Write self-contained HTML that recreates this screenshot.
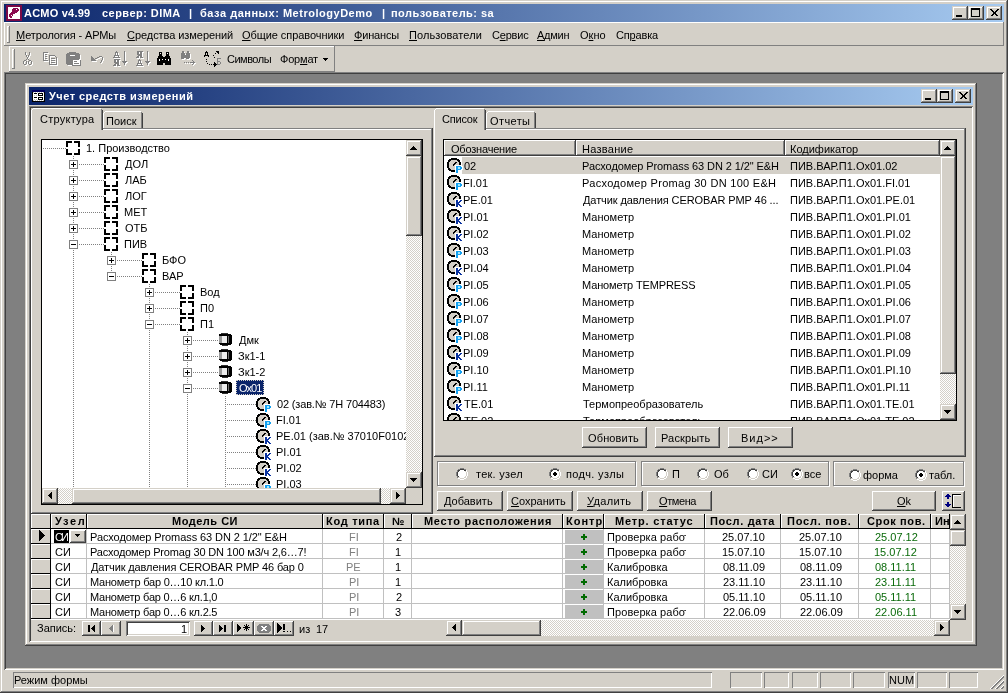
<!DOCTYPE html>
<html><head><meta charset="utf-8"><style>
html,body{margin:0;padding:0;width:1008px;height:693px;overflow:hidden;background:#d4d0c8}
body{position:relative;font-family:"Liberation Sans",sans-serif;font-size:11px;line-height:13px}
div,svg{position:absolute;box-sizing:border-box}
.t{white-space:pre;line-height:13px;will-change:transform}
u{text-decoration:underline;text-underline-offset:1px}
</style></head><body>
<div style="left:0px;top:0px;width:1008px;height:693px;background:#d4d0c8;box-shadow:inset -1px -1px #404040,inset 1px 1px #d4d0c8,inset -2px -2px #808080,inset 2px 2px #ffffff"></div>
<div style="left:4px;top:4px;width:1000px;height:18px;background:linear-gradient(to right,#0a246a,#a6caf0)"></div>
<svg style="left:6px;top:5px;" width="16" height="16" viewBox="0 0 16 16" shape-rendering="crispEdges"><rect x="0" y="0" width="16" height="16" fill="#7a0a46"/><rect x="2" y="2" width="12" height="12" fill="#ffffff"/><rect x="7" y="3" width="5" height="1" fill="#8b0a50"/><rect x="6" y="4" width="7" height="1" fill="#8b0a50"/><rect x="6" y="5" width="7" height="1" fill="#8b0a50"/><rect x="6" y="6" width="6" height="1" fill="#8b0a50"/><rect x="5" y="7" width="6" height="1" fill="#8b0a50"/><rect x="4" y="8" width="5" height="1" fill="#8b0a50"/><rect x="3" y="9" width="5" height="1" fill="#8b0a50"/><rect x="3" y="10" width="4" height="1" fill="#8b0a50"/><rect x="3" y="11" width="3" height="1" fill="#8b0a50"/><rect x="4" y="12" width="2" height="1" fill="#8b0a50"/><rect x="10" y="4" width="1" height="1" fill="#ffffff"/><rect x="9" y="8" width="1" height="1" fill="#ffffff"/><rect x="7" y="9" width="1" height="1" fill="#ffffff"/><rect x="5" y="10" width="1" height="1" fill="#ffffff"/></svg>
<div class="t" style="left:24.00px;top:7px;color:#fff;font-weight:bold;letter-spacing:0.222px;">ACMO v4.99</div>
<div class="t" style="left:102.00px;top:7px;color:#fff;font-weight:bold;letter-spacing:0.455px;">сервер: DIMA</div>
<div class="t" style="left:189.00px;top:7px;color:#fff;font-weight:bold;">|</div>
<div class="t" style="left:200.00px;top:7px;color:#fff;font-weight:bold;letter-spacing:0.520px;">база данных: MetrologyDemo</div>
<div class="t" style="left:382.00px;top:7px;color:#fff;font-weight:bold;">|</div>
<div class="t" style="left:391.00px;top:7px;color:#fff;font-weight:bold;letter-spacing:0.467px;">пользователь: sa</div>
<div style="left:952px;top:6px;width:16px;height:14px;background:#d4d0c8;box-shadow:inset -1px -1px #404040,inset 1px 1px #d4d0c8,inset -2px -2px #808080,inset 2px 2px #ffffff"></div>
<div style="left:968px;top:6px;width:16px;height:14px;background:#d4d0c8;box-shadow:inset -1px -1px #404040,inset 1px 1px #d4d0c8,inset -2px -2px #808080,inset 2px 2px #ffffff"></div>
<div style="left:986px;top:6px;width:16px;height:14px;background:#d4d0c8;box-shadow:inset -1px -1px #404040,inset 1px 1px #d4d0c8,inset -2px -2px #808080,inset 2px 2px #ffffff"></div>
<svg style="left:952px;top:6px;" width="16" height="14" viewBox="0 0 16 14" shape-rendering="crispEdges"><rect x="4" y="9" width="6" height="2" fill="#000"/></svg>
<svg style="left:968px;top:6px;" width="16" height="14" viewBox="0 0 16 14" shape-rendering="crispEdges"><rect x="3" y="2" width="9" height="9" fill="#000"/><rect x="4" y="4" width="7" height="6" fill="#d4d0c8"/></svg>
<svg style="left:986px;top:6px;" width="16" height="14" viewBox="0 0 16 14" shape-rendering="crispEdges"><path d="M4.5 3.5 L11.5 10.5 M11.5 3.5 L4.5 10.5 M5.5 3.5 L12.5 10.5 M12.5 3.5 L5.5 10.5" stroke="#000" stroke-width="1" shape-rendering="crispEdges"/></svg>
<div style="left:4px;top:22px;width:1000px;height:24px;box-shadow:inset -1px -1px #808080,inset 1px 1px #ffffff"></div>
<div style="left:7px;top:26px;width:3px;height:17px;box-shadow:inset -1px -1px #808080,inset 1px 1px #ffffff"></div>
<div class="t" style="left:16.00px;top:29px;color:#000;letter-spacing:-0.125px;"><u>М</u>етрология - АРМы</div>
<div class="t" style="left:127.00px;top:29px;color:#000;letter-spacing:-0.059px;"><u>С</u>редства измерений</div>
<div class="t" style="left:242.00px;top:29px;color:#000;letter-spacing:-0.062px;"><u>О</u>бщие справочники</div>
<div class="t" style="left:354.00px;top:29px;color:#000;letter-spacing:-0.167px;"><u>Ф</u>инансы</div>
<div class="t" style="left:409.00px;top:29px;color:#000;letter-spacing:0.091px;"><u>П</u>ользователи</div>
<div class="t" style="left:492.00px;top:29px;color:#000;letter-spacing:-0.200px;">С<u>е</u>рвис</div>
<div class="t" style="left:537.00px;top:29px;color:#000;letter-spacing:-0.250px;"><u>А</u>дмин</div>
<div class="t" style="left:580.00px;top:29px;color:#000;">О<u>к</u>но</div>
<div class="t" style="left:616.00px;top:29px;color:#000;letter-spacing:-0.167px;">Сп<u>р</u>авка</div>
<div style="left:9px;top:46px;width:326px;height:26px;box-shadow:inset -1px -1px #808080,inset 1px 1px #ffffff"></div>
<div style="left:12px;top:49px;width:3px;height:20px;box-shadow:inset -1px -1px #808080,inset 1px 1px #ffffff"></div>
<div class="t" style="left:227.00px;top:53px;color:#000;letter-spacing:-0.500px;">Символы</div>
<div class="t" style="left:280.00px;top:53px;color:#000;letter-spacing:-0.200px;">Фор<u>м</u>ат</div>
<svg style="left:323px;top:58px;" width="6" height="4" viewBox="0 0 6 4" shape-rendering="crispEdges"><rect x="0" y="0" width="5" height="1" fill="#000"/><rect x="1" y="1" width="3" height="1" fill="#000"/><rect x="2" y="2" width="1" height="1" fill="#000"/></svg>
<div style="left:4px;top:72px;width:1000px;height:598px;background:#808080;box-shadow:inset 1px 1px #808080,inset -1px -1px #ffffff,inset 2px 2px #404040,inset -2px -2px #d4d0c8"></div>
<div style="left:13px;top:672px;width:699px;height:16px;box-shadow:inset 1px 1px #808080,inset -1px -1px #ffffff"></div>
<div style="left:730px;top:672px;width:32px;height:16px;box-shadow:inset 1px 1px #808080,inset -1px -1px #ffffff"></div>
<div style="left:764px;top:672px;width:25px;height:16px;box-shadow:inset 1px 1px #808080,inset -1px -1px #ffffff"></div>
<div style="left:792px;top:672px;width:26px;height:16px;box-shadow:inset 1px 1px #808080,inset -1px -1px #ffffff"></div>
<div style="left:820px;top:672px;width:31px;height:16px;box-shadow:inset 1px 1px #808080,inset -1px -1px #ffffff"></div>
<div style="left:853px;top:672px;width:32px;height:16px;box-shadow:inset 1px 1px #808080,inset -1px -1px #ffffff"></div>
<div style="left:888px;top:672px;width:27px;height:16px;box-shadow:inset 1px 1px #808080,inset -1px -1px #ffffff"></div>
<div style="left:917px;top:672px;width:30px;height:16px;box-shadow:inset 1px 1px #808080,inset -1px -1px #ffffff"></div>
<div style="left:949px;top:672px;width:29px;height:16px;box-shadow:inset 1px 1px #808080,inset -1px -1px #ffffff"></div>
<div class="t" style="left:14.00px;top:674px;color:#000;">Режим формы</div>
<div class="t" style="left:889.00px;top:674px;color:#000;">NUM</div>
<svg style="left:990px;top:675px;" width="14" height="14" viewBox="0 0 14 14" shape-rendering="crispEdges"><rect x="0" y="13" width="1" height="1" fill="#fff"/><rect x="1" y="12" width="1" height="1" fill="#fff"/><rect x="2" y="11" width="1" height="1" fill="#fff"/><rect x="3" y="10" width="1" height="1" fill="#fff"/><rect x="4" y="9" width="1" height="1" fill="#fff"/><rect x="5" y="8" width="1" height="1" fill="#fff"/><rect x="5" y="13" width="1" height="1" fill="#fff"/><rect x="6" y="7" width="1" height="1" fill="#fff"/><rect x="6" y="12" width="1" height="1" fill="#fff"/><rect x="7" y="6" width="1" height="1" fill="#fff"/><rect x="7" y="11" width="1" height="1" fill="#fff"/><rect x="8" y="5" width="1" height="1" fill="#fff"/><rect x="8" y="10" width="1" height="1" fill="#fff"/><rect x="9" y="4" width="1" height="1" fill="#fff"/><rect x="9" y="9" width="1" height="1" fill="#fff"/><rect x="10" y="3" width="1" height="1" fill="#fff"/><rect x="10" y="8" width="1" height="1" fill="#fff"/><rect x="10" y="13" width="1" height="1" fill="#fff"/><rect x="11" y="2" width="1" height="1" fill="#fff"/><rect x="11" y="7" width="1" height="1" fill="#fff"/><rect x="11" y="12" width="1" height="1" fill="#fff"/><rect x="12" y="1" width="1" height="1" fill="#fff"/><rect x="12" y="6" width="1" height="1" fill="#fff"/><rect x="12" y="11" width="1" height="1" fill="#fff"/><rect x="13" y="0" width="1" height="1" fill="#fff"/><rect x="13" y="5" width="1" height="1" fill="#fff"/><rect x="13" y="10" width="1" height="1" fill="#fff"/><rect x="1" y="13" width="1" height="1" fill="#808080"/><rect x="2" y="12" width="1" height="1" fill="#808080"/><rect x="2" y="13" width="1" height="1" fill="#808080"/><rect x="3" y="11" width="1" height="1" fill="#808080"/><rect x="3" y="12" width="1" height="1" fill="#808080"/><rect x="4" y="10" width="1" height="1" fill="#808080"/><rect x="4" y="11" width="1" height="1" fill="#808080"/><rect x="5" y="9" width="1" height="1" fill="#808080"/><rect x="5" y="10" width="1" height="1" fill="#808080"/><rect x="6" y="8" width="1" height="1" fill="#808080"/><rect x="6" y="9" width="1" height="1" fill="#808080"/><rect x="6" y="13" width="1" height="1" fill="#808080"/><rect x="7" y="7" width="1" height="1" fill="#808080"/><rect x="7" y="8" width="1" height="1" fill="#808080"/><rect x="7" y="12" width="1" height="1" fill="#808080"/><rect x="7" y="13" width="1" height="1" fill="#808080"/><rect x="8" y="6" width="1" height="1" fill="#808080"/><rect x="8" y="7" width="1" height="1" fill="#808080"/><rect x="8" y="11" width="1" height="1" fill="#808080"/><rect x="8" y="12" width="1" height="1" fill="#808080"/><rect x="9" y="5" width="1" height="1" fill="#808080"/><rect x="9" y="6" width="1" height="1" fill="#808080"/><rect x="9" y="10" width="1" height="1" fill="#808080"/><rect x="9" y="11" width="1" height="1" fill="#808080"/><rect x="10" y="4" width="1" height="1" fill="#808080"/><rect x="10" y="5" width="1" height="1" fill="#808080"/><rect x="10" y="9" width="1" height="1" fill="#808080"/><rect x="10" y="10" width="1" height="1" fill="#808080"/><rect x="11" y="3" width="1" height="1" fill="#808080"/><rect x="11" y="4" width="1" height="1" fill="#808080"/><rect x="11" y="8" width="1" height="1" fill="#808080"/><rect x="11" y="9" width="1" height="1" fill="#808080"/><rect x="11" y="13" width="1" height="1" fill="#808080"/><rect x="12" y="2" width="1" height="1" fill="#808080"/><rect x="12" y="3" width="1" height="1" fill="#808080"/><rect x="12" y="7" width="1" height="1" fill="#808080"/><rect x="12" y="8" width="1" height="1" fill="#808080"/><rect x="12" y="12" width="1" height="1" fill="#808080"/><rect x="12" y="13" width="1" height="1" fill="#808080"/><rect x="13" y="1" width="1" height="1" fill="#808080"/><rect x="13" y="2" width="1" height="1" fill="#808080"/><rect x="13" y="6" width="1" height="1" fill="#808080"/><rect x="13" y="7" width="1" height="1" fill="#808080"/><rect x="13" y="11" width="1" height="1" fill="#808080"/><rect x="13" y="12" width="1" height="1" fill="#808080"/></svg>
<div style="left:25px;top:83px;width:952px;height:563px;background:#d4d0c8;box-shadow:inset -1px -1px #404040,inset 1px 1px #d4d0c8,inset -2px -2px #808080,inset 2px 2px #ffffff"></div>
<div style="left:29px;top:87px;width:944px;height:18px;background:linear-gradient(to right,#0a246a,#a6caf0)"></div>
<svg style="left:32px;top:90px;" width="13" height="12" viewBox="0 0 13 12" shape-rendering="crispEdges"><rect x="0" y="0" width="13" height="2" fill="#000060"/><rect x="0" y="2" width="1" height="10" fill="#000"/><rect x="12" y="2" width="1" height="10" fill="#000"/><rect x="0" y="11" width="13" height="1" fill="#000"/><rect x="1" y="2" width="11" height="9" fill="#fff"/><rect x="2" y="3" width="3" height="1" fill="#000"/><rect x="2" y="7" width="3" height="1" fill="#000"/><rect x="6" y="3" width="5" height="3" fill="#000"/><rect x="6" y="7" width="5" height="3" fill="#000"/><rect x="7" y="4" width="3" height="1" fill="#fff"/><rect x="7" y="8" width="3" height="1" fill="#fff"/><rect x="2" y="5" width="1" height="1" fill="#c0c0c0"/><rect x="4" y="5" width="1" height="1" fill="#c0c0c0"/><rect x="2" y="9" width="1" height="1" fill="#c0c0c0"/><rect x="4" y="9" width="1" height="1" fill="#c0c0c0"/><rect x="1" y="2" width="1" height="1" fill="#c0c0c0"/><rect x="3" y="2" width="1" height="1" fill="#c0c0c0"/><rect x="5" y="2" width="1" height="1" fill="#c0c0c0"/><rect x="7" y="2" width="1" height="1" fill="#c0c0c0"/><rect x="9" y="2" width="1" height="1" fill="#c0c0c0"/><rect x="11" y="2" width="1" height="1" fill="#c0c0c0"/><rect x="1" y="10" width="1" height="1" fill="#c0c0c0"/><rect x="3" y="10" width="1" height="1" fill="#c0c0c0"/><rect x="5" y="10" width="1" height="1" fill="#c0c0c0"/><rect x="7" y="10" width="1" height="1" fill="#c0c0c0"/><rect x="9" y="10" width="1" height="1" fill="#c0c0c0"/><rect x="11" y="10" width="1" height="1" fill="#c0c0c0"/></svg>
<div class="t" style="left:49.00px;top:90px;color:#fff;font-weight:bold;letter-spacing:0.476px;">Учет средств измерений</div>
<div style="left:921px;top:89px;width:16px;height:14px;background:#d4d0c8;box-shadow:inset -1px -1px #404040,inset 1px 1px #d4d0c8,inset -2px -2px #808080,inset 2px 2px #ffffff"></div>
<div style="left:937px;top:89px;width:16px;height:14px;background:#d4d0c8;box-shadow:inset -1px -1px #404040,inset 1px 1px #d4d0c8,inset -2px -2px #808080,inset 2px 2px #ffffff"></div>
<div style="left:955px;top:89px;width:16px;height:14px;background:#d4d0c8;box-shadow:inset -1px -1px #404040,inset 1px 1px #d4d0c8,inset -2px -2px #808080,inset 2px 2px #ffffff"></div>
<svg style="left:921px;top:89px;" width="16" height="14" viewBox="0 0 16 14" shape-rendering="crispEdges"><rect x="4" y="9" width="6" height="2" fill="#000"/></svg>
<svg style="left:937px;top:89px;" width="16" height="14" viewBox="0 0 16 14" shape-rendering="crispEdges"><rect x="3" y="2" width="9" height="9" fill="#000"/><rect x="4" y="4" width="7" height="6" fill="#d4d0c8"/></svg>
<svg style="left:955px;top:89px;" width="16" height="14" viewBox="0 0 16 14" shape-rendering="crispEdges"><path d="M4.5 3.5 L11.5 10.5 M11.5 3.5 L4.5 10.5 M5.5 3.5 L12.5 10.5 M12.5 3.5 L5.5 10.5" stroke="#000" stroke-width="1" shape-rendering="crispEdges"/></svg>
<div style="left:29px;top:106px;width:944px;height:536px;box-shadow:inset 1px 1px #808080,inset -1px -1px #ffffff,inset 2px 2px #404040,inset -2px -2px #d4d0c8"></div>
<div style="left:31px;top:128px;width:402px;height:386px;background:#d4d0c8"></div>
<div style="left:31px;top:128px;width:401px;height:1px;background:#808080"></div>
<div style="left:31px;top:129px;width:400px;height:1px;background:#ffffff"></div>
<div style="left:31px;top:129px;width:1px;height:384px;background:#ffffff"></div>
<div style="left:432px;top:128px;width:1px;height:386px;background:#404040"></div>
<div style="left:431px;top:129px;width:1px;height:384px;background:#808080"></div>
<div style="left:31px;top:513px;width:402px;height:1px;background:#404040"></div>
<div style="left:32px;top:512px;width:400px;height:1px;background:#808080"></div>
<div style="left:103px;top:111px;width:40px;height:17px;background:#d4d0c8"></div>
<div style="left:103px;top:113px;width:1px;height:15px;background:#ffffff"></div>
<div style="left:105px;top:111px;width:36px;height:1px;background:#ffffff"></div>
<div style="left:104px;top:112px;width:1px;height:1px;background:#ffffff"></div>
<div style="left:142px;top:113px;width:1px;height:15px;background:#404040"></div>
<div style="left:141px;top:112px;width:1px;height:16px;background:#808080"></div>
<div style="left:141px;top:112px;width:1px;height:1px;background:#808080"></div>
<div style="left:31px;top:108px;width:72px;height:22px;background:#d4d0c8"></div>
<div style="left:31px;top:110px;width:1px;height:20px;background:#ffffff"></div>
<div style="left:33px;top:108px;width:68px;height:1px;background:#ffffff"></div>
<div style="left:32px;top:109px;width:1px;height:1px;background:#ffffff"></div>
<div style="left:102px;top:110px;width:1px;height:20px;background:#404040"></div>
<div style="left:101px;top:109px;width:1px;height:21px;background:#808080"></div>
<div style="left:101px;top:109px;width:1px;height:1px;background:#808080"></div>
<div style="left:32px;top:128px;width:69px;height:1px;background:#d4d0c8"></div>
<div style="left:32px;top:129px;width:69px;height:1px;background:#d4d0c8"></div>
<div class="t" style="left:40.00px;top:113px;color:#000;letter-spacing:0.250px;">Структура</div>
<div class="t" style="left:106.00px;top:115px;color:#000;">Поиск</div>
<div style="left:41px;top:139px;width:382px;height:366px;background:#fff;border:1px solid #000"></div>
<svg style="left:42px;top:140px;overflow:hidden" width="364" height="348" viewBox="0 0 364 348" shape-rendering="crispEdges"><defs><pattern id="dt" width="2" height="2" patternUnits="userSpaceOnUse"><rect x="1" y="0" width="1" height="1" fill="#808080"/><rect x="0" y="1" width="1" height="1" fill="#808080"/></pattern></defs><g><rect x="31" y="15" width="1" height="333" fill="url(#dt)"/><rect x="69" y="111" width="1" height="26" fill="url(#dt)"/><rect x="107" y="143" width="1" height="205" fill="url(#dt)"/><rect x="145" y="191" width="1" height="157" fill="url(#dt)"/><rect x="183" y="255" width="1" height="93" fill="url(#dt)"/><rect x="0" y="8" width="24" height="1" fill="url(#dt)"/><rect x="31" y="24" width="31" height="1" fill="url(#dt)"/><rect x="31" y="40" width="31" height="1" fill="url(#dt)"/><rect x="31" y="56" width="31" height="1" fill="url(#dt)"/><rect x="31" y="72" width="31" height="1" fill="url(#dt)"/><rect x="31" y="88" width="31" height="1" fill="url(#dt)"/><rect x="31" y="104" width="31" height="1" fill="url(#dt)"/><rect x="69" y="120" width="31" height="1" fill="url(#dt)"/><rect x="69" y="136" width="31" height="1" fill="url(#dt)"/><rect x="107" y="152" width="31" height="1" fill="url(#dt)"/><rect x="107" y="168" width="31" height="1" fill="url(#dt)"/><rect x="107" y="184" width="31" height="1" fill="url(#dt)"/><rect x="145" y="200" width="31" height="1" fill="url(#dt)"/><rect x="145" y="216" width="31" height="1" fill="url(#dt)"/><rect x="145" y="232" width="31" height="1" fill="url(#dt)"/><rect x="145" y="248" width="31" height="1" fill="url(#dt)"/><rect x="183" y="264" width="31" height="1" fill="url(#dt)"/><rect x="183" y="280" width="31" height="1" fill="url(#dt)"/><rect x="183" y="296" width="31" height="1" fill="url(#dt)"/><rect x="183" y="312" width="31" height="1" fill="url(#dt)"/><rect x="183" y="328" width="31" height="1" fill="url(#dt)"/><rect x="183" y="344" width="31" height="1" fill="url(#dt)"/></g><g transform="translate(-42,-140)"><rect x="66" y="141" width="6" height="2" fill="#000"/><rect x="66" y="141" width="2" height="6" fill="#000"/><rect x="74" y="141" width="6" height="2" fill="#000"/><rect x="78" y="141" width="2" height="6" fill="#000"/><rect x="66" y="149" width="2" height="6" fill="#000"/><rect x="66" y="153" width="6" height="2" fill="#000"/><rect x="78" y="149" width="2" height="6" fill="#000"/><rect x="74" y="153" width="6" height="2" fill="#000"/><rect x="69" y="160" width="9" height="9" fill="#808080"/><rect x="70" y="161" width="7" height="7" fill="#fff"/><rect x="71" y="164" width="5" height="1" fill="#000"/><rect x="73" y="162" width="1" height="5" fill="#000"/><rect x="104" y="157" width="6" height="2" fill="#000"/><rect x="104" y="157" width="2" height="6" fill="#000"/><rect x="112" y="157" width="6" height="2" fill="#000"/><rect x="116" y="157" width="2" height="6" fill="#000"/><rect x="104" y="165" width="2" height="6" fill="#000"/><rect x="104" y="169" width="6" height="2" fill="#000"/><rect x="116" y="165" width="2" height="6" fill="#000"/><rect x="112" y="169" width="6" height="2" fill="#000"/><rect x="69" y="176" width="9" height="9" fill="#808080"/><rect x="70" y="177" width="7" height="7" fill="#fff"/><rect x="71" y="180" width="5" height="1" fill="#000"/><rect x="73" y="178" width="1" height="5" fill="#000"/><rect x="104" y="173" width="6" height="2" fill="#000"/><rect x="104" y="173" width="2" height="6" fill="#000"/><rect x="112" y="173" width="6" height="2" fill="#000"/><rect x="116" y="173" width="2" height="6" fill="#000"/><rect x="104" y="181" width="2" height="6" fill="#000"/><rect x="104" y="185" width="6" height="2" fill="#000"/><rect x="116" y="181" width="2" height="6" fill="#000"/><rect x="112" y="185" width="6" height="2" fill="#000"/><rect x="69" y="192" width="9" height="9" fill="#808080"/><rect x="70" y="193" width="7" height="7" fill="#fff"/><rect x="71" y="196" width="5" height="1" fill="#000"/><rect x="73" y="194" width="1" height="5" fill="#000"/><rect x="104" y="189" width="6" height="2" fill="#000"/><rect x="104" y="189" width="2" height="6" fill="#000"/><rect x="112" y="189" width="6" height="2" fill="#000"/><rect x="116" y="189" width="2" height="6" fill="#000"/><rect x="104" y="197" width="2" height="6" fill="#000"/><rect x="104" y="201" width="6" height="2" fill="#000"/><rect x="116" y="197" width="2" height="6" fill="#000"/><rect x="112" y="201" width="6" height="2" fill="#000"/><rect x="69" y="208" width="9" height="9" fill="#808080"/><rect x="70" y="209" width="7" height="7" fill="#fff"/><rect x="71" y="212" width="5" height="1" fill="#000"/><rect x="73" y="210" width="1" height="5" fill="#000"/><rect x="104" y="205" width="6" height="2" fill="#000"/><rect x="104" y="205" width="2" height="6" fill="#000"/><rect x="112" y="205" width="6" height="2" fill="#000"/><rect x="116" y="205" width="2" height="6" fill="#000"/><rect x="104" y="213" width="2" height="6" fill="#000"/><rect x="104" y="217" width="6" height="2" fill="#000"/><rect x="116" y="213" width="2" height="6" fill="#000"/><rect x="112" y="217" width="6" height="2" fill="#000"/><rect x="69" y="224" width="9" height="9" fill="#808080"/><rect x="70" y="225" width="7" height="7" fill="#fff"/><rect x="71" y="228" width="5" height="1" fill="#000"/><rect x="73" y="226" width="1" height="5" fill="#000"/><rect x="104" y="221" width="6" height="2" fill="#000"/><rect x="104" y="221" width="2" height="6" fill="#000"/><rect x="112" y="221" width="6" height="2" fill="#000"/><rect x="116" y="221" width="2" height="6" fill="#000"/><rect x="104" y="229" width="2" height="6" fill="#000"/><rect x="104" y="233" width="6" height="2" fill="#000"/><rect x="116" y="229" width="2" height="6" fill="#000"/><rect x="112" y="233" width="6" height="2" fill="#000"/><rect x="69" y="240" width="9" height="9" fill="#808080"/><rect x="70" y="241" width="7" height="7" fill="#fff"/><rect x="71" y="244" width="5" height="1" fill="#000"/><rect x="104" y="237" width="6" height="2" fill="#000"/><rect x="104" y="237" width="2" height="6" fill="#000"/><rect x="112" y="237" width="6" height="2" fill="#000"/><rect x="116" y="237" width="2" height="6" fill="#000"/><rect x="104" y="245" width="2" height="6" fill="#000"/><rect x="104" y="249" width="6" height="2" fill="#000"/><rect x="116" y="245" width="2" height="6" fill="#000"/><rect x="112" y="249" width="6" height="2" fill="#000"/><rect x="107" y="256" width="9" height="9" fill="#808080"/><rect x="108" y="257" width="7" height="7" fill="#fff"/><rect x="109" y="260" width="5" height="1" fill="#000"/><rect x="111" y="258" width="1" height="5" fill="#000"/><rect x="142" y="253" width="6" height="2" fill="#000"/><rect x="142" y="253" width="2" height="6" fill="#000"/><rect x="150" y="253" width="6" height="2" fill="#000"/><rect x="154" y="253" width="2" height="6" fill="#000"/><rect x="142" y="261" width="2" height="6" fill="#000"/><rect x="142" y="265" width="6" height="2" fill="#000"/><rect x="154" y="261" width="2" height="6" fill="#000"/><rect x="150" y="265" width="6" height="2" fill="#000"/><rect x="107" y="272" width="9" height="9" fill="#808080"/><rect x="108" y="273" width="7" height="7" fill="#fff"/><rect x="109" y="276" width="5" height="1" fill="#000"/><rect x="142" y="269" width="6" height="2" fill="#000"/><rect x="142" y="269" width="2" height="6" fill="#000"/><rect x="150" y="269" width="6" height="2" fill="#000"/><rect x="154" y="269" width="2" height="6" fill="#000"/><rect x="142" y="277" width="2" height="6" fill="#000"/><rect x="142" y="281" width="6" height="2" fill="#000"/><rect x="154" y="277" width="2" height="6" fill="#000"/><rect x="150" y="281" width="6" height="2" fill="#000"/><rect x="145" y="288" width="9" height="9" fill="#808080"/><rect x="146" y="289" width="7" height="7" fill="#fff"/><rect x="147" y="292" width="5" height="1" fill="#000"/><rect x="149" y="290" width="1" height="5" fill="#000"/><rect x="180" y="285" width="6" height="2" fill="#000"/><rect x="180" y="285" width="2" height="6" fill="#000"/><rect x="188" y="285" width="6" height="2" fill="#000"/><rect x="192" y="285" width="2" height="6" fill="#000"/><rect x="180" y="293" width="2" height="6" fill="#000"/><rect x="180" y="297" width="6" height="2" fill="#000"/><rect x="192" y="293" width="2" height="6" fill="#000"/><rect x="188" y="297" width="6" height="2" fill="#000"/><rect x="145" y="304" width="9" height="9" fill="#808080"/><rect x="146" y="305" width="7" height="7" fill="#fff"/><rect x="147" y="308" width="5" height="1" fill="#000"/><rect x="149" y="306" width="1" height="5" fill="#000"/><rect x="180" y="301" width="6" height="2" fill="#000"/><rect x="180" y="301" width="2" height="6" fill="#000"/><rect x="188" y="301" width="6" height="2" fill="#000"/><rect x="192" y="301" width="2" height="6" fill="#000"/><rect x="180" y="309" width="2" height="6" fill="#000"/><rect x="180" y="313" width="6" height="2" fill="#000"/><rect x="192" y="309" width="2" height="6" fill="#000"/><rect x="188" y="313" width="6" height="2" fill="#000"/><rect x="145" y="320" width="9" height="9" fill="#808080"/><rect x="146" y="321" width="7" height="7" fill="#fff"/><rect x="147" y="324" width="5" height="1" fill="#000"/><rect x="180" y="317" width="6" height="2" fill="#000"/><rect x="180" y="317" width="2" height="6" fill="#000"/><rect x="188" y="317" width="6" height="2" fill="#000"/><rect x="192" y="317" width="2" height="6" fill="#000"/><rect x="180" y="325" width="2" height="6" fill="#000"/><rect x="180" y="329" width="6" height="2" fill="#000"/><rect x="192" y="325" width="2" height="6" fill="#000"/><rect x="188" y="329" width="6" height="2" fill="#000"/><rect x="183" y="336" width="9" height="9" fill="#808080"/><rect x="184" y="337" width="7" height="7" fill="#fff"/><rect x="185" y="340" width="5" height="1" fill="#000"/><rect x="187" y="338" width="1" height="5" fill="#000"/><rect x="221" y="333" width="7" height="1" fill="#303030"/><rect x="219" y="334" width="12" height="1" fill="#000"/><rect x="219" y="335" width="13" height="1" fill="#000"/><rect x="219" y="343" width="13" height="1" fill="#000"/><rect x="220" y="344" width="11" height="1" fill="#000"/><rect x="222" y="345" width="6" height="1" fill="#303030"/><rect x="219" y="336" width="3" height="7" fill="#9a9a9a"/><rect x="222" y="336" width="5" height="7" fill="#ececec"/><rect x="227" y="336" width="1" height="7" fill="#000"/><rect x="228" y="336" width="1" height="7" fill="#6a6a6a"/><rect x="229" y="336" width="3" height="7" fill="#000"/><rect x="183" y="352" width="9" height="9" fill="#808080"/><rect x="184" y="353" width="7" height="7" fill="#fff"/><rect x="185" y="356" width="5" height="1" fill="#000"/><rect x="187" y="354" width="1" height="5" fill="#000"/><rect x="221" y="349" width="7" height="1" fill="#303030"/><rect x="219" y="350" width="12" height="1" fill="#000"/><rect x="219" y="351" width="13" height="1" fill="#000"/><rect x="219" y="359" width="13" height="1" fill="#000"/><rect x="220" y="360" width="11" height="1" fill="#000"/><rect x="222" y="361" width="6" height="1" fill="#303030"/><rect x="219" y="352" width="3" height="7" fill="#9a9a9a"/><rect x="222" y="352" width="5" height="7" fill="#ececec"/><rect x="227" y="352" width="1" height="7" fill="#000"/><rect x="228" y="352" width="1" height="7" fill="#6a6a6a"/><rect x="229" y="352" width="3" height="7" fill="#000"/><rect x="183" y="368" width="9" height="9" fill="#808080"/><rect x="184" y="369" width="7" height="7" fill="#fff"/><rect x="185" y="372" width="5" height="1" fill="#000"/><rect x="187" y="370" width="1" height="5" fill="#000"/><rect x="221" y="365" width="7" height="1" fill="#303030"/><rect x="219" y="366" width="12" height="1" fill="#000"/><rect x="219" y="367" width="13" height="1" fill="#000"/><rect x="219" y="375" width="13" height="1" fill="#000"/><rect x="220" y="376" width="11" height="1" fill="#000"/><rect x="222" y="377" width="6" height="1" fill="#303030"/><rect x="219" y="368" width="3" height="7" fill="#9a9a9a"/><rect x="222" y="368" width="5" height="7" fill="#ececec"/><rect x="227" y="368" width="1" height="7" fill="#000"/><rect x="228" y="368" width="1" height="7" fill="#6a6a6a"/><rect x="229" y="368" width="3" height="7" fill="#000"/><rect x="183" y="384" width="9" height="9" fill="#808080"/><rect x="184" y="385" width="7" height="7" fill="#fff"/><rect x="185" y="388" width="5" height="1" fill="#000"/><rect x="221" y="381" width="7" height="1" fill="#303030"/><rect x="219" y="382" width="12" height="1" fill="#000"/><rect x="219" y="383" width="13" height="1" fill="#000"/><rect x="219" y="391" width="13" height="1" fill="#000"/><rect x="220" y="392" width="11" height="1" fill="#000"/><rect x="222" y="393" width="6" height="1" fill="#303030"/><rect x="219" y="384" width="3" height="7" fill="#9a9a9a"/><rect x="222" y="384" width="5" height="7" fill="#ececec"/><rect x="227" y="384" width="1" height="7" fill="#000"/><rect x="228" y="384" width="1" height="7" fill="#6a6a6a"/><rect x="229" y="384" width="3" height="7" fill="#000"/><rect x="260" y="399" width="6" height="1" fill="#d4d0c8"/><rect x="259" y="400" width="8" height="1" fill="#d4d0c8"/><rect x="258" y="401" width="10" height="6" fill="#d4d0c8"/><rect x="259" y="407" width="8" height="1" fill="#d4d0c8"/><rect x="260" y="408" width="6" height="1" fill="#d4d0c8"/><rect x="260" y="397" width="6" height="1" fill="#000"/><rect x="258" y="398" width="10" height="1" fill="#000"/><rect x="257" y="399" width="3" height="1" fill="#000"/><rect x="266" y="399" width="3" height="1" fill="#000"/><rect x="257" y="400" width="2" height="1" fill="#000"/><rect x="267" y="400" width="2" height="1" fill="#000"/><rect x="256" y="401" width="2" height="6" fill="#000"/><rect x="268" y="401" width="2" height="6" fill="#000"/><rect x="257" y="407" width="2" height="1" fill="#000"/><rect x="267" y="407" width="2" height="1" fill="#000"/><rect x="257" y="408" width="3" height="1" fill="#000"/><rect x="266" y="408" width="3" height="1" fill="#000"/><rect x="258" y="409" width="10" height="1" fill="#000"/><rect x="260" y="410" width="6" height="1" fill="#000"/><rect x="264" y="401" width="2" height="1" fill="#000"/><rect x="263" y="402" width="2" height="1" fill="#000"/><rect x="262" y="403" width="2" height="1" fill="#000"/><rect x="262" y="404" width="1" height="1" fill="#000"/><rect x="264" y="404" width="7" height="3" fill="#fff"/><rect x="264" y="405" width="4" height="8" fill="#fff"/><rect x="268" y="405" width="4" height="4" fill="#fff"/><rect x="264" y="407" width="7" height="3" fill="#fff"/><rect x="267" y="406" width="2" height="2" fill="#a0e8ff"/><rect x="265" y="405" width="5" height="1" fill="#14a0f0"/><rect x="265" y="406" width="2" height="6" fill="#14a0f0"/><rect x="269" y="406" width="2" height="2" fill="#14a0f0"/><rect x="265" y="408" width="5" height="1" fill="#14a0f0"/><rect x="260" y="415" width="6" height="1" fill="#d4d0c8"/><rect x="259" y="416" width="8" height="1" fill="#d4d0c8"/><rect x="258" y="417" width="10" height="6" fill="#d4d0c8"/><rect x="259" y="423" width="8" height="1" fill="#d4d0c8"/><rect x="260" y="424" width="6" height="1" fill="#d4d0c8"/><rect x="260" y="413" width="6" height="1" fill="#000"/><rect x="258" y="414" width="10" height="1" fill="#000"/><rect x="257" y="415" width="3" height="1" fill="#000"/><rect x="266" y="415" width="3" height="1" fill="#000"/><rect x="257" y="416" width="2" height="1" fill="#000"/><rect x="267" y="416" width="2" height="1" fill="#000"/><rect x="256" y="417" width="2" height="6" fill="#000"/><rect x="268" y="417" width="2" height="6" fill="#000"/><rect x="257" y="423" width="2" height="1" fill="#000"/><rect x="267" y="423" width="2" height="1" fill="#000"/><rect x="257" y="424" width="3" height="1" fill="#000"/><rect x="266" y="424" width="3" height="1" fill="#000"/><rect x="258" y="425" width="10" height="1" fill="#000"/><rect x="260" y="426" width="6" height="1" fill="#000"/><rect x="264" y="417" width="2" height="1" fill="#000"/><rect x="263" y="418" width="2" height="1" fill="#000"/><rect x="262" y="419" width="2" height="1" fill="#000"/><rect x="262" y="420" width="1" height="1" fill="#000"/><rect x="264" y="420" width="7" height="3" fill="#fff"/><rect x="264" y="421" width="4" height="8" fill="#fff"/><rect x="268" y="421" width="4" height="4" fill="#fff"/><rect x="264" y="423" width="7" height="3" fill="#fff"/><rect x="267" y="422" width="2" height="2" fill="#a0e8ff"/><rect x="265" y="421" width="5" height="1" fill="#14a0f0"/><rect x="265" y="422" width="2" height="6" fill="#14a0f0"/><rect x="269" y="422" width="2" height="2" fill="#14a0f0"/><rect x="265" y="424" width="5" height="1" fill="#14a0f0"/><rect x="260" y="431" width="6" height="1" fill="#d4d0c8"/><rect x="259" y="432" width="8" height="1" fill="#d4d0c8"/><rect x="258" y="433" width="10" height="6" fill="#d4d0c8"/><rect x="259" y="439" width="8" height="1" fill="#d4d0c8"/><rect x="260" y="440" width="6" height="1" fill="#d4d0c8"/><rect x="260" y="429" width="6" height="1" fill="#000"/><rect x="258" y="430" width="10" height="1" fill="#000"/><rect x="257" y="431" width="3" height="1" fill="#000"/><rect x="266" y="431" width="3" height="1" fill="#000"/><rect x="257" y="432" width="2" height="1" fill="#000"/><rect x="267" y="432" width="2" height="1" fill="#000"/><rect x="256" y="433" width="2" height="6" fill="#000"/><rect x="268" y="433" width="2" height="6" fill="#000"/><rect x="257" y="439" width="2" height="1" fill="#000"/><rect x="267" y="439" width="2" height="1" fill="#000"/><rect x="257" y="440" width="3" height="1" fill="#000"/><rect x="266" y="440" width="3" height="1" fill="#000"/><rect x="258" y="441" width="10" height="1" fill="#000"/><rect x="260" y="442" width="6" height="1" fill="#000"/><rect x="264" y="433" width="2" height="1" fill="#000"/><rect x="263" y="434" width="2" height="1" fill="#000"/><rect x="262" y="435" width="2" height="1" fill="#000"/><rect x="262" y="436" width="1" height="1" fill="#000"/><rect x="264" y="436" width="4" height="9" fill="#fff"/><rect x="268" y="436" width="4" height="3" fill="#fff"/><rect x="267" y="437" width="4" height="3" fill="#fff"/><rect x="266" y="438" width="4" height="3" fill="#fff"/><rect x="266" y="439" width="3" height="3" fill="#fff"/><rect x="266" y="440" width="4" height="3" fill="#fff"/><rect x="267" y="441" width="4" height="3" fill="#fff"/><rect x="268" y="442" width="4" height="3" fill="#fff"/><rect x="265" y="437" width="2" height="7" fill="#0a32a0"/><rect x="269" y="437" width="2" height="1" fill="#0a32a0"/><rect x="268" y="438" width="2" height="1" fill="#0a32a0"/><rect x="267" y="439" width="2" height="1" fill="#0a32a0"/><rect x="267" y="440" width="1" height="1" fill="#0a32a0"/><rect x="267" y="441" width="2" height="1" fill="#0a32a0"/><rect x="268" y="442" width="2" height="1" fill="#0a32a0"/><rect x="269" y="443" width="2" height="1" fill="#0a32a0"/><rect x="260" y="447" width="6" height="1" fill="#d4d0c8"/><rect x="259" y="448" width="8" height="1" fill="#d4d0c8"/><rect x="258" y="449" width="10" height="6" fill="#d4d0c8"/><rect x="259" y="455" width="8" height="1" fill="#d4d0c8"/><rect x="260" y="456" width="6" height="1" fill="#d4d0c8"/><rect x="260" y="445" width="6" height="1" fill="#000"/><rect x="258" y="446" width="10" height="1" fill="#000"/><rect x="257" y="447" width="3" height="1" fill="#000"/><rect x="266" y="447" width="3" height="1" fill="#000"/><rect x="257" y="448" width="2" height="1" fill="#000"/><rect x="267" y="448" width="2" height="1" fill="#000"/><rect x="256" y="449" width="2" height="6" fill="#000"/><rect x="268" y="449" width="2" height="6" fill="#000"/><rect x="257" y="455" width="2" height="1" fill="#000"/><rect x="267" y="455" width="2" height="1" fill="#000"/><rect x="257" y="456" width="3" height="1" fill="#000"/><rect x="266" y="456" width="3" height="1" fill="#000"/><rect x="258" y="457" width="10" height="1" fill="#000"/><rect x="260" y="458" width="6" height="1" fill="#000"/><rect x="264" y="449" width="2" height="1" fill="#000"/><rect x="263" y="450" width="2" height="1" fill="#000"/><rect x="262" y="451" width="2" height="1" fill="#000"/><rect x="262" y="452" width="1" height="1" fill="#000"/><rect x="264" y="452" width="4" height="9" fill="#fff"/><rect x="268" y="452" width="4" height="3" fill="#fff"/><rect x="267" y="453" width="4" height="3" fill="#fff"/><rect x="266" y="454" width="4" height="3" fill="#fff"/><rect x="266" y="455" width="3" height="3" fill="#fff"/><rect x="266" y="456" width="4" height="3" fill="#fff"/><rect x="267" y="457" width="4" height="3" fill="#fff"/><rect x="268" y="458" width="4" height="3" fill="#fff"/><rect x="265" y="453" width="2" height="7" fill="#0a32a0"/><rect x="269" y="453" width="2" height="1" fill="#0a32a0"/><rect x="268" y="454" width="2" height="1" fill="#0a32a0"/><rect x="267" y="455" width="2" height="1" fill="#0a32a0"/><rect x="267" y="456" width="1" height="1" fill="#0a32a0"/><rect x="267" y="457" width="2" height="1" fill="#0a32a0"/><rect x="268" y="458" width="2" height="1" fill="#0a32a0"/><rect x="269" y="459" width="2" height="1" fill="#0a32a0"/><rect x="260" y="463" width="6" height="1" fill="#d4d0c8"/><rect x="259" y="464" width="8" height="1" fill="#d4d0c8"/><rect x="258" y="465" width="10" height="6" fill="#d4d0c8"/><rect x="259" y="471" width="8" height="1" fill="#d4d0c8"/><rect x="260" y="472" width="6" height="1" fill="#d4d0c8"/><rect x="260" y="461" width="6" height="1" fill="#000"/><rect x="258" y="462" width="10" height="1" fill="#000"/><rect x="257" y="463" width="3" height="1" fill="#000"/><rect x="266" y="463" width="3" height="1" fill="#000"/><rect x="257" y="464" width="2" height="1" fill="#000"/><rect x="267" y="464" width="2" height="1" fill="#000"/><rect x="256" y="465" width="2" height="6" fill="#000"/><rect x="268" y="465" width="2" height="6" fill="#000"/><rect x="257" y="471" width="2" height="1" fill="#000"/><rect x="267" y="471" width="2" height="1" fill="#000"/><rect x="257" y="472" width="3" height="1" fill="#000"/><rect x="266" y="472" width="3" height="1" fill="#000"/><rect x="258" y="473" width="10" height="1" fill="#000"/><rect x="260" y="474" width="6" height="1" fill="#000"/><rect x="264" y="465" width="2" height="1" fill="#000"/><rect x="263" y="466" width="2" height="1" fill="#000"/><rect x="262" y="467" width="2" height="1" fill="#000"/><rect x="262" y="468" width="1" height="1" fill="#000"/><rect x="264" y="468" width="4" height="9" fill="#fff"/><rect x="268" y="468" width="4" height="3" fill="#fff"/><rect x="267" y="469" width="4" height="3" fill="#fff"/><rect x="266" y="470" width="4" height="3" fill="#fff"/><rect x="266" y="471" width="3" height="3" fill="#fff"/><rect x="266" y="472" width="4" height="3" fill="#fff"/><rect x="267" y="473" width="4" height="3" fill="#fff"/><rect x="268" y="474" width="4" height="3" fill="#fff"/><rect x="265" y="469" width="2" height="7" fill="#0a32a0"/><rect x="269" y="469" width="2" height="1" fill="#0a32a0"/><rect x="268" y="470" width="2" height="1" fill="#0a32a0"/><rect x="267" y="471" width="2" height="1" fill="#0a32a0"/><rect x="267" y="472" width="1" height="1" fill="#0a32a0"/><rect x="267" y="473" width="2" height="1" fill="#0a32a0"/><rect x="268" y="474" width="2" height="1" fill="#0a32a0"/><rect x="269" y="475" width="2" height="1" fill="#0a32a0"/><rect x="260" y="479" width="6" height="1" fill="#d4d0c8"/><rect x="259" y="480" width="8" height="1" fill="#d4d0c8"/><rect x="258" y="481" width="10" height="6" fill="#d4d0c8"/><rect x="259" y="487" width="8" height="1" fill="#d4d0c8"/><rect x="260" y="488" width="6" height="1" fill="#d4d0c8"/><rect x="260" y="477" width="6" height="1" fill="#000"/><rect x="258" y="478" width="10" height="1" fill="#000"/><rect x="257" y="479" width="3" height="1" fill="#000"/><rect x="266" y="479" width="3" height="1" fill="#000"/><rect x="257" y="480" width="2" height="1" fill="#000"/><rect x="267" y="480" width="2" height="1" fill="#000"/><rect x="256" y="481" width="2" height="6" fill="#000"/><rect x="268" y="481" width="2" height="6" fill="#000"/><rect x="257" y="487" width="2" height="1" fill="#000"/><rect x="267" y="487" width="2" height="1" fill="#000"/><rect x="257" y="488" width="3" height="1" fill="#000"/><rect x="266" y="488" width="3" height="1" fill="#000"/><rect x="258" y="489" width="10" height="1" fill="#000"/><rect x="260" y="490" width="6" height="1" fill="#000"/><rect x="264" y="481" width="2" height="1" fill="#000"/><rect x="263" y="482" width="2" height="1" fill="#000"/><rect x="262" y="483" width="2" height="1" fill="#000"/><rect x="262" y="484" width="1" height="1" fill="#000"/><rect x="264" y="484" width="7" height="3" fill="#fff"/><rect x="264" y="485" width="4" height="8" fill="#fff"/><rect x="268" y="485" width="4" height="4" fill="#fff"/><rect x="264" y="487" width="7" height="3" fill="#fff"/><rect x="267" y="486" width="2" height="2" fill="#a0e8ff"/><rect x="265" y="485" width="5" height="1" fill="#14a0f0"/><rect x="265" y="486" width="2" height="6" fill="#14a0f0"/><rect x="269" y="486" width="2" height="2" fill="#14a0f0"/><rect x="265" y="488" width="5" height="1" fill="#14a0f0"/></g></svg>
<div style="left:236px;top:380px;width:28px;height:15px;background:#0a246a;outline:1px dotted #d4d0c8;outline-offset:-1px"></div>
<div class="t" style="left:86.00px;top:142px;color:#000;">1. Производство</div>
<div class="t" style="left:125.00px;top:158px;color:#000;">ДОЛ</div>
<div class="t" style="left:125.00px;top:174px;color:#000;">ЛАБ</div>
<div class="t" style="left:125.00px;top:190px;color:#000;">ЛОГ</div>
<div class="t" style="left:124.00px;top:206px;color:#000;">МЕТ</div>
<div class="t" style="left:125.00px;top:222px;color:#000;">ОТБ</div>
<div class="t" style="left:124.00px;top:238px;color:#000;">ПИВ</div>
<div class="t" style="left:162.00px;top:254px;color:#000;">БФО</div>
<div class="t" style="left:162.00px;top:270px;color:#000;">ВАР</div>
<div class="t" style="left:200.00px;top:286px;color:#000;">Вод</div>
<div class="t" style="left:200.00px;top:302px;color:#000;">П0</div>
<div class="t" style="left:200.00px;top:318px;color:#000;">П1</div>
<div class="t" style="left:239.00px;top:334px;color:#000;">Дмк</div>
<div class="t" style="left:238.00px;top:350px;color:#000;">Зк1-1</div>
<div class="t" style="left:238.00px;top:366px;color:#000;">Зк1-2</div>
<div class="t" style="left:239.00px;top:382px;color:#fff;letter-spacing:-1.000px;">Ox01</div>
<div class="t" style="left:277.00px;top:398px;color:#000;letter-spacing:-0.158px;">02 (зав.№ 7H 704483)</div>
<div class="t" style="left:276.00px;top:414px;color:#000;">FI.01</div>
<div class="t" style="left:276.00px;top:430px;color:#000;">PE.01 (зав.№ 37010F0102</div>
<div class="t" style="left:276.00px;top:446px;color:#000;">PI.01</div>
<div class="t" style="left:276.00px;top:462px;color:#000;">PI.02</div>
<div class="t" style="left:276.00px;top:478px;color:#000;">PI.03</div>
<div style="left:406px;top:140px;width:16px;height:348px;background-color:#d4d0c8;background-image:linear-gradient(45deg,#fff 25%,transparent 25%,transparent 75%,#fff 75%),linear-gradient(45deg,#fff 25%,transparent 25%,transparent 75%,#fff 75%);background-size:2px 2px;background-position:0 0,1px 1px"></div>
<div style="left:406px;top:140px;width:16px;height:16px;background:#d4d0c8;box-shadow:inset -1px -1px #404040,inset 1px 1px #d4d0c8,inset -2px -2px #808080,inset 2px 2px #ffffff"></div>
<svg style="left:410px;top:146px;" width="7" height="4" viewBox="0 0 7 4" shape-rendering="crispEdges"><rect x="0" y="3" width="7" height="1" fill="#000"/><rect x="1" y="2" width="5" height="1" fill="#000"/><rect x="2" y="1" width="3" height="1" fill="#000"/><rect x="3" y="0" width="1" height="1" fill="#000"/></svg>
<div style="left:406px;top:156px;width:16px;height:80px;background:#d4d0c8;box-shadow:inset -1px -1px #404040,inset 1px 1px #d4d0c8,inset -2px -2px #808080,inset 2px 2px #ffffff"></div>
<div style="left:406px;top:472px;width:16px;height:16px;background:#d4d0c8;box-shadow:inset -1px -1px #404040,inset 1px 1px #d4d0c8,inset -2px -2px #808080,inset 2px 2px #ffffff"></div>
<svg style="left:410px;top:478px;" width="7" height="4" viewBox="0 0 7 4" shape-rendering="crispEdges"><rect x="0" y="0" width="7" height="1" fill="#000"/><rect x="1" y="1" width="5" height="1" fill="#000"/><rect x="2" y="2" width="3" height="1" fill="#000"/><rect x="3" y="3" width="1" height="1" fill="#000"/></svg>
<div style="left:42px;top:488px;width:364px;height:16px;background-color:#d4d0c8;background-image:linear-gradient(45deg,#fff 25%,transparent 25%,transparent 75%,#fff 75%),linear-gradient(45deg,#fff 25%,transparent 25%,transparent 75%,#fff 75%);background-size:2px 2px;background-position:0 0,1px 1px"></div>
<div style="left:42px;top:488px;width:16px;height:16px;background:#d4d0c8;box-shadow:inset -1px -1px #404040,inset 1px 1px #d4d0c8,inset -2px -2px #808080,inset 2px 2px #ffffff"></div>
<svg style="left:48px;top:492px;" width="4" height="7" viewBox="0 0 4 7" shape-rendering="crispEdges"><rect x="3" y="0" width="1" height="7" fill="#000"/><rect x="2" y="1" width="1" height="5" fill="#000"/><rect x="1" y="2" width="1" height="3" fill="#000"/><rect x="0" y="3" width="1" height="1" fill="#000"/></svg>
<div style="left:72px;top:488px;width:309px;height:16px;background:#d4d0c8;box-shadow:inset -1px -1px #404040,inset 1px 1px #d4d0c8,inset -2px -2px #808080,inset 2px 2px #ffffff"></div>
<div style="left:390px;top:488px;width:16px;height:16px;background:#d4d0c8;box-shadow:inset -1px -1px #404040,inset 1px 1px #d4d0c8,inset -2px -2px #808080,inset 2px 2px #ffffff"></div>
<svg style="left:396px;top:492px;" width="4" height="7" viewBox="0 0 4 7" shape-rendering="crispEdges"><rect x="0" y="0" width="1" height="7" fill="#000"/><rect x="1" y="1" width="1" height="5" fill="#000"/><rect x="2" y="2" width="1" height="3" fill="#000"/><rect x="3" y="3" width="1" height="1" fill="#000"/></svg>
<div style="left:406px;top:488px;width:16px;height:16px;background:#d4d0c8"></div>
<div style="left:434px;top:128px;width:532px;height:329px;background:#d4d0c8"></div>
<div style="left:434px;top:128px;width:531px;height:1px;background:#808080"></div>
<div style="left:434px;top:129px;width:530px;height:1px;background:#ffffff"></div>
<div style="left:434px;top:129px;width:1px;height:327px;background:#ffffff"></div>
<div style="left:965px;top:128px;width:1px;height:329px;background:#404040"></div>
<div style="left:964px;top:129px;width:1px;height:327px;background:#808080"></div>
<div style="left:434px;top:456px;width:532px;height:1px;background:#404040"></div>
<div style="left:435px;top:455px;width:530px;height:1px;background:#808080"></div>
<div style="left:486px;top:111px;width:50px;height:17px;background:#d4d0c8"></div>
<div style="left:486px;top:113px;width:1px;height:15px;background:#ffffff"></div>
<div style="left:488px;top:111px;width:46px;height:1px;background:#ffffff"></div>
<div style="left:487px;top:112px;width:1px;height:1px;background:#ffffff"></div>
<div style="left:535px;top:113px;width:1px;height:15px;background:#404040"></div>
<div style="left:534px;top:112px;width:1px;height:16px;background:#808080"></div>
<div style="left:534px;top:112px;width:1px;height:1px;background:#808080"></div>
<div style="left:434px;top:108px;width:52px;height:22px;background:#d4d0c8"></div>
<div style="left:434px;top:110px;width:1px;height:20px;background:#ffffff"></div>
<div style="left:436px;top:108px;width:48px;height:1px;background:#ffffff"></div>
<div style="left:435px;top:109px;width:1px;height:1px;background:#ffffff"></div>
<div style="left:485px;top:110px;width:1px;height:20px;background:#404040"></div>
<div style="left:484px;top:109px;width:1px;height:21px;background:#808080"></div>
<div style="left:484px;top:109px;width:1px;height:1px;background:#808080"></div>
<div style="left:435px;top:128px;width:49px;height:1px;background:#d4d0c8"></div>
<div style="left:435px;top:129px;width:49px;height:1px;background:#d4d0c8"></div>
<div class="t" style="left:442.00px;top:113px;color:#000;letter-spacing:-0.200px;">Список</div>
<div class="t" style="left:490.00px;top:115px;color:#000;letter-spacing:0.400px;">Отчеты</div>
<div style="left:443px;top:139px;width:514px;height:282px;background:#fff;border:1px solid #000"></div>
<div style="left:444px;top:140px;width:132px;height:16px;background:#d4d0c8;box-shadow:inset -1px -1px #404040,inset 1px 1px #ffffff,inset -2px -2px #808080"></div>
<div style="left:576px;top:140px;width:209px;height:16px;background:#d4d0c8;box-shadow:inset -1px -1px #404040,inset 1px 1px #ffffff,inset -2px -2px #808080"></div>
<div style="left:785px;top:140px;width:155px;height:16px;background:#d4d0c8;box-shadow:inset -1px -1px #404040,inset 1px 1px #ffffff,inset -2px -2px #808080"></div>
<div style="left:940px;top:140px;width:16px;height:16px;background:#d4d0c8;box-shadow:inset -1px -1px #404040,inset 1px 1px #d4d0c8,inset -2px -2px #808080,inset 2px 2px #ffffff"></div>
<div class="t" style="left:451.00px;top:143px;color:#000;letter-spacing:-0.200px;">Обозначение</div>
<div class="t" style="left:582.00px;top:143px;color:#000;letter-spacing:0.286px;">Название</div>
<div class="t" style="left:790.00px;top:143px;color:#000;">Кодификатор</div>
<div style="left:444px;top:156px;width:496px;height:264px;overflow:hidden">
<div style="left:18px;top:1px;width:478px;height:17px;background:#d4d0c8"></div>
<svg style="left:0px;top:0px;" width="20" height="264" viewBox="0 0 20 264" shape-rendering="crispEdges"><rect x="7" y="4" width="6" height="1" fill="#d4d0c8"/><rect x="6" y="5" width="8" height="1" fill="#d4d0c8"/><rect x="5" y="6" width="10" height="6" fill="#d4d0c8"/><rect x="6" y="12" width="8" height="1" fill="#d4d0c8"/><rect x="7" y="13" width="6" height="1" fill="#d4d0c8"/><rect x="7" y="2" width="6" height="1" fill="#000"/><rect x="5" y="3" width="10" height="1" fill="#000"/><rect x="4" y="4" width="3" height="1" fill="#000"/><rect x="13" y="4" width="3" height="1" fill="#000"/><rect x="4" y="5" width="2" height="1" fill="#000"/><rect x="14" y="5" width="2" height="1" fill="#000"/><rect x="3" y="6" width="2" height="6" fill="#000"/><rect x="15" y="6" width="2" height="6" fill="#000"/><rect x="4" y="12" width="2" height="1" fill="#000"/><rect x="14" y="12" width="2" height="1" fill="#000"/><rect x="4" y="13" width="3" height="1" fill="#000"/><rect x="13" y="13" width="3" height="1" fill="#000"/><rect x="5" y="14" width="10" height="1" fill="#000"/><rect x="7" y="15" width="6" height="1" fill="#000"/><rect x="11" y="6" width="2" height="1" fill="#000"/><rect x="10" y="7" width="2" height="1" fill="#000"/><rect x="9" y="8" width="2" height="1" fill="#000"/><rect x="9" y="9" width="1" height="1" fill="#000"/><rect x="11" y="9" width="7" height="3" fill="#fff"/><rect x="11" y="10" width="4" height="8" fill="#fff"/><rect x="15" y="10" width="4" height="4" fill="#fff"/><rect x="11" y="12" width="7" height="3" fill="#fff"/><rect x="14" y="11" width="2" height="2" fill="#a0e8ff"/><rect x="12" y="10" width="5" height="1" fill="#14a0f0"/><rect x="12" y="11" width="2" height="6" fill="#14a0f0"/><rect x="16" y="11" width="2" height="2" fill="#14a0f0"/><rect x="12" y="13" width="5" height="1" fill="#14a0f0"/><rect x="7" y="21" width="6" height="1" fill="#d4d0c8"/><rect x="6" y="22" width="8" height="1" fill="#d4d0c8"/><rect x="5" y="23" width="10" height="6" fill="#d4d0c8"/><rect x="6" y="29" width="8" height="1" fill="#d4d0c8"/><rect x="7" y="30" width="6" height="1" fill="#d4d0c8"/><rect x="7" y="19" width="6" height="1" fill="#000"/><rect x="5" y="20" width="10" height="1" fill="#000"/><rect x="4" y="21" width="3" height="1" fill="#000"/><rect x="13" y="21" width="3" height="1" fill="#000"/><rect x="4" y="22" width="2" height="1" fill="#000"/><rect x="14" y="22" width="2" height="1" fill="#000"/><rect x="3" y="23" width="2" height="6" fill="#000"/><rect x="15" y="23" width="2" height="6" fill="#000"/><rect x="4" y="29" width="2" height="1" fill="#000"/><rect x="14" y="29" width="2" height="1" fill="#000"/><rect x="4" y="30" width="3" height="1" fill="#000"/><rect x="13" y="30" width="3" height="1" fill="#000"/><rect x="5" y="31" width="10" height="1" fill="#000"/><rect x="7" y="32" width="6" height="1" fill="#000"/><rect x="11" y="23" width="2" height="1" fill="#000"/><rect x="10" y="24" width="2" height="1" fill="#000"/><rect x="9" y="25" width="2" height="1" fill="#000"/><rect x="9" y="26" width="1" height="1" fill="#000"/><rect x="11" y="26" width="7" height="3" fill="#fff"/><rect x="11" y="27" width="4" height="8" fill="#fff"/><rect x="15" y="27" width="4" height="4" fill="#fff"/><rect x="11" y="29" width="7" height="3" fill="#fff"/><rect x="14" y="28" width="2" height="2" fill="#a0e8ff"/><rect x="12" y="27" width="5" height="1" fill="#14a0f0"/><rect x="12" y="28" width="2" height="6" fill="#14a0f0"/><rect x="16" y="28" width="2" height="2" fill="#14a0f0"/><rect x="12" y="30" width="5" height="1" fill="#14a0f0"/><rect x="7" y="38" width="6" height="1" fill="#d4d0c8"/><rect x="6" y="39" width="8" height="1" fill="#d4d0c8"/><rect x="5" y="40" width="10" height="6" fill="#d4d0c8"/><rect x="6" y="46" width="8" height="1" fill="#d4d0c8"/><rect x="7" y="47" width="6" height="1" fill="#d4d0c8"/><rect x="7" y="36" width="6" height="1" fill="#000"/><rect x="5" y="37" width="10" height="1" fill="#000"/><rect x="4" y="38" width="3" height="1" fill="#000"/><rect x="13" y="38" width="3" height="1" fill="#000"/><rect x="4" y="39" width="2" height="1" fill="#000"/><rect x="14" y="39" width="2" height="1" fill="#000"/><rect x="3" y="40" width="2" height="6" fill="#000"/><rect x="15" y="40" width="2" height="6" fill="#000"/><rect x="4" y="46" width="2" height="1" fill="#000"/><rect x="14" y="46" width="2" height="1" fill="#000"/><rect x="4" y="47" width="3" height="1" fill="#000"/><rect x="13" y="47" width="3" height="1" fill="#000"/><rect x="5" y="48" width="10" height="1" fill="#000"/><rect x="7" y="49" width="6" height="1" fill="#000"/><rect x="11" y="40" width="2" height="1" fill="#000"/><rect x="10" y="41" width="2" height="1" fill="#000"/><rect x="9" y="42" width="2" height="1" fill="#000"/><rect x="9" y="43" width="1" height="1" fill="#000"/><rect x="11" y="43" width="4" height="9" fill="#fff"/><rect x="15" y="43" width="4" height="3" fill="#fff"/><rect x="14" y="44" width="4" height="3" fill="#fff"/><rect x="13" y="45" width="4" height="3" fill="#fff"/><rect x="13" y="46" width="3" height="3" fill="#fff"/><rect x="13" y="47" width="4" height="3" fill="#fff"/><rect x="14" y="48" width="4" height="3" fill="#fff"/><rect x="15" y="49" width="4" height="3" fill="#fff"/><rect x="12" y="44" width="2" height="7" fill="#0a32a0"/><rect x="16" y="44" width="2" height="1" fill="#0a32a0"/><rect x="15" y="45" width="2" height="1" fill="#0a32a0"/><rect x="14" y="46" width="2" height="1" fill="#0a32a0"/><rect x="14" y="47" width="1" height="1" fill="#0a32a0"/><rect x="14" y="48" width="2" height="1" fill="#0a32a0"/><rect x="15" y="49" width="2" height="1" fill="#0a32a0"/><rect x="16" y="50" width="2" height="1" fill="#0a32a0"/><rect x="7" y="55" width="6" height="1" fill="#d4d0c8"/><rect x="6" y="56" width="8" height="1" fill="#d4d0c8"/><rect x="5" y="57" width="10" height="6" fill="#d4d0c8"/><rect x="6" y="63" width="8" height="1" fill="#d4d0c8"/><rect x="7" y="64" width="6" height="1" fill="#d4d0c8"/><rect x="7" y="53" width="6" height="1" fill="#000"/><rect x="5" y="54" width="10" height="1" fill="#000"/><rect x="4" y="55" width="3" height="1" fill="#000"/><rect x="13" y="55" width="3" height="1" fill="#000"/><rect x="4" y="56" width="2" height="1" fill="#000"/><rect x="14" y="56" width="2" height="1" fill="#000"/><rect x="3" y="57" width="2" height="6" fill="#000"/><rect x="15" y="57" width="2" height="6" fill="#000"/><rect x="4" y="63" width="2" height="1" fill="#000"/><rect x="14" y="63" width="2" height="1" fill="#000"/><rect x="4" y="64" width="3" height="1" fill="#000"/><rect x="13" y="64" width="3" height="1" fill="#000"/><rect x="5" y="65" width="10" height="1" fill="#000"/><rect x="7" y="66" width="6" height="1" fill="#000"/><rect x="11" y="57" width="2" height="1" fill="#000"/><rect x="10" y="58" width="2" height="1" fill="#000"/><rect x="9" y="59" width="2" height="1" fill="#000"/><rect x="9" y="60" width="1" height="1" fill="#000"/><rect x="11" y="60" width="4" height="9" fill="#fff"/><rect x="15" y="60" width="4" height="3" fill="#fff"/><rect x="14" y="61" width="4" height="3" fill="#fff"/><rect x="13" y="62" width="4" height="3" fill="#fff"/><rect x="13" y="63" width="3" height="3" fill="#fff"/><rect x="13" y="64" width="4" height="3" fill="#fff"/><rect x="14" y="65" width="4" height="3" fill="#fff"/><rect x="15" y="66" width="4" height="3" fill="#fff"/><rect x="12" y="61" width="2" height="7" fill="#0a32a0"/><rect x="16" y="61" width="2" height="1" fill="#0a32a0"/><rect x="15" y="62" width="2" height="1" fill="#0a32a0"/><rect x="14" y="63" width="2" height="1" fill="#0a32a0"/><rect x="14" y="64" width="1" height="1" fill="#0a32a0"/><rect x="14" y="65" width="2" height="1" fill="#0a32a0"/><rect x="15" y="66" width="2" height="1" fill="#0a32a0"/><rect x="16" y="67" width="2" height="1" fill="#0a32a0"/><rect x="7" y="72" width="6" height="1" fill="#d4d0c8"/><rect x="6" y="73" width="8" height="1" fill="#d4d0c8"/><rect x="5" y="74" width="10" height="6" fill="#d4d0c8"/><rect x="6" y="80" width="8" height="1" fill="#d4d0c8"/><rect x="7" y="81" width="6" height="1" fill="#d4d0c8"/><rect x="7" y="70" width="6" height="1" fill="#000"/><rect x="5" y="71" width="10" height="1" fill="#000"/><rect x="4" y="72" width="3" height="1" fill="#000"/><rect x="13" y="72" width="3" height="1" fill="#000"/><rect x="4" y="73" width="2" height="1" fill="#000"/><rect x="14" y="73" width="2" height="1" fill="#000"/><rect x="3" y="74" width="2" height="6" fill="#000"/><rect x="15" y="74" width="2" height="6" fill="#000"/><rect x="4" y="80" width="2" height="1" fill="#000"/><rect x="14" y="80" width="2" height="1" fill="#000"/><rect x="4" y="81" width="3" height="1" fill="#000"/><rect x="13" y="81" width="3" height="1" fill="#000"/><rect x="5" y="82" width="10" height="1" fill="#000"/><rect x="7" y="83" width="6" height="1" fill="#000"/><rect x="11" y="74" width="2" height="1" fill="#000"/><rect x="10" y="75" width="2" height="1" fill="#000"/><rect x="9" y="76" width="2" height="1" fill="#000"/><rect x="9" y="77" width="1" height="1" fill="#000"/><rect x="11" y="77" width="4" height="9" fill="#fff"/><rect x="15" y="77" width="4" height="3" fill="#fff"/><rect x="14" y="78" width="4" height="3" fill="#fff"/><rect x="13" y="79" width="4" height="3" fill="#fff"/><rect x="13" y="80" width="3" height="3" fill="#fff"/><rect x="13" y="81" width="4" height="3" fill="#fff"/><rect x="14" y="82" width="4" height="3" fill="#fff"/><rect x="15" y="83" width="4" height="3" fill="#fff"/><rect x="12" y="78" width="2" height="7" fill="#0a32a0"/><rect x="16" y="78" width="2" height="1" fill="#0a32a0"/><rect x="15" y="79" width="2" height="1" fill="#0a32a0"/><rect x="14" y="80" width="2" height="1" fill="#0a32a0"/><rect x="14" y="81" width="1" height="1" fill="#0a32a0"/><rect x="14" y="82" width="2" height="1" fill="#0a32a0"/><rect x="15" y="83" width="2" height="1" fill="#0a32a0"/><rect x="16" y="84" width="2" height="1" fill="#0a32a0"/><rect x="7" y="89" width="6" height="1" fill="#d4d0c8"/><rect x="6" y="90" width="8" height="1" fill="#d4d0c8"/><rect x="5" y="91" width="10" height="6" fill="#d4d0c8"/><rect x="6" y="97" width="8" height="1" fill="#d4d0c8"/><rect x="7" y="98" width="6" height="1" fill="#d4d0c8"/><rect x="7" y="87" width="6" height="1" fill="#000"/><rect x="5" y="88" width="10" height="1" fill="#000"/><rect x="4" y="89" width="3" height="1" fill="#000"/><rect x="13" y="89" width="3" height="1" fill="#000"/><rect x="4" y="90" width="2" height="1" fill="#000"/><rect x="14" y="90" width="2" height="1" fill="#000"/><rect x="3" y="91" width="2" height="6" fill="#000"/><rect x="15" y="91" width="2" height="6" fill="#000"/><rect x="4" y="97" width="2" height="1" fill="#000"/><rect x="14" y="97" width="2" height="1" fill="#000"/><rect x="4" y="98" width="3" height="1" fill="#000"/><rect x="13" y="98" width="3" height="1" fill="#000"/><rect x="5" y="99" width="10" height="1" fill="#000"/><rect x="7" y="100" width="6" height="1" fill="#000"/><rect x="11" y="91" width="2" height="1" fill="#000"/><rect x="10" y="92" width="2" height="1" fill="#000"/><rect x="9" y="93" width="2" height="1" fill="#000"/><rect x="9" y="94" width="1" height="1" fill="#000"/><rect x="11" y="94" width="7" height="3" fill="#fff"/><rect x="11" y="95" width="4" height="8" fill="#fff"/><rect x="15" y="95" width="4" height="4" fill="#fff"/><rect x="11" y="97" width="7" height="3" fill="#fff"/><rect x="14" y="96" width="2" height="2" fill="#a0e8ff"/><rect x="12" y="95" width="5" height="1" fill="#14a0f0"/><rect x="12" y="96" width="2" height="6" fill="#14a0f0"/><rect x="16" y="96" width="2" height="2" fill="#14a0f0"/><rect x="12" y="98" width="5" height="1" fill="#14a0f0"/><rect x="7" y="106" width="6" height="1" fill="#d4d0c8"/><rect x="6" y="107" width="8" height="1" fill="#d4d0c8"/><rect x="5" y="108" width="10" height="6" fill="#d4d0c8"/><rect x="6" y="114" width="8" height="1" fill="#d4d0c8"/><rect x="7" y="115" width="6" height="1" fill="#d4d0c8"/><rect x="7" y="104" width="6" height="1" fill="#000"/><rect x="5" y="105" width="10" height="1" fill="#000"/><rect x="4" y="106" width="3" height="1" fill="#000"/><rect x="13" y="106" width="3" height="1" fill="#000"/><rect x="4" y="107" width="2" height="1" fill="#000"/><rect x="14" y="107" width="2" height="1" fill="#000"/><rect x="3" y="108" width="2" height="6" fill="#000"/><rect x="15" y="108" width="2" height="6" fill="#000"/><rect x="4" y="114" width="2" height="1" fill="#000"/><rect x="14" y="114" width="2" height="1" fill="#000"/><rect x="4" y="115" width="3" height="1" fill="#000"/><rect x="13" y="115" width="3" height="1" fill="#000"/><rect x="5" y="116" width="10" height="1" fill="#000"/><rect x="7" y="117" width="6" height="1" fill="#000"/><rect x="11" y="108" width="2" height="1" fill="#000"/><rect x="10" y="109" width="2" height="1" fill="#000"/><rect x="9" y="110" width="2" height="1" fill="#000"/><rect x="9" y="111" width="1" height="1" fill="#000"/><rect x="11" y="111" width="4" height="9" fill="#fff"/><rect x="15" y="111" width="4" height="3" fill="#fff"/><rect x="14" y="112" width="4" height="3" fill="#fff"/><rect x="13" y="113" width="4" height="3" fill="#fff"/><rect x="13" y="114" width="3" height="3" fill="#fff"/><rect x="13" y="115" width="4" height="3" fill="#fff"/><rect x="14" y="116" width="4" height="3" fill="#fff"/><rect x="15" y="117" width="4" height="3" fill="#fff"/><rect x="12" y="112" width="2" height="7" fill="#0a32a0"/><rect x="16" y="112" width="2" height="1" fill="#0a32a0"/><rect x="15" y="113" width="2" height="1" fill="#0a32a0"/><rect x="14" y="114" width="2" height="1" fill="#0a32a0"/><rect x="14" y="115" width="1" height="1" fill="#0a32a0"/><rect x="14" y="116" width="2" height="1" fill="#0a32a0"/><rect x="15" y="117" width="2" height="1" fill="#0a32a0"/><rect x="16" y="118" width="2" height="1" fill="#0a32a0"/><rect x="7" y="123" width="6" height="1" fill="#d4d0c8"/><rect x="6" y="124" width="8" height="1" fill="#d4d0c8"/><rect x="5" y="125" width="10" height="6" fill="#d4d0c8"/><rect x="6" y="131" width="8" height="1" fill="#d4d0c8"/><rect x="7" y="132" width="6" height="1" fill="#d4d0c8"/><rect x="7" y="121" width="6" height="1" fill="#000"/><rect x="5" y="122" width="10" height="1" fill="#000"/><rect x="4" y="123" width="3" height="1" fill="#000"/><rect x="13" y="123" width="3" height="1" fill="#000"/><rect x="4" y="124" width="2" height="1" fill="#000"/><rect x="14" y="124" width="2" height="1" fill="#000"/><rect x="3" y="125" width="2" height="6" fill="#000"/><rect x="15" y="125" width="2" height="6" fill="#000"/><rect x="4" y="131" width="2" height="1" fill="#000"/><rect x="14" y="131" width="2" height="1" fill="#000"/><rect x="4" y="132" width="3" height="1" fill="#000"/><rect x="13" y="132" width="3" height="1" fill="#000"/><rect x="5" y="133" width="10" height="1" fill="#000"/><rect x="7" y="134" width="6" height="1" fill="#000"/><rect x="11" y="125" width="2" height="1" fill="#000"/><rect x="10" y="126" width="2" height="1" fill="#000"/><rect x="9" y="127" width="2" height="1" fill="#000"/><rect x="9" y="128" width="1" height="1" fill="#000"/><rect x="11" y="128" width="7" height="3" fill="#fff"/><rect x="11" y="129" width="4" height="8" fill="#fff"/><rect x="15" y="129" width="4" height="4" fill="#fff"/><rect x="11" y="131" width="7" height="3" fill="#fff"/><rect x="14" y="130" width="2" height="2" fill="#a0e8ff"/><rect x="12" y="129" width="5" height="1" fill="#14a0f0"/><rect x="12" y="130" width="2" height="6" fill="#14a0f0"/><rect x="16" y="130" width="2" height="2" fill="#14a0f0"/><rect x="12" y="132" width="5" height="1" fill="#14a0f0"/><rect x="7" y="140" width="6" height="1" fill="#d4d0c8"/><rect x="6" y="141" width="8" height="1" fill="#d4d0c8"/><rect x="5" y="142" width="10" height="6" fill="#d4d0c8"/><rect x="6" y="148" width="8" height="1" fill="#d4d0c8"/><rect x="7" y="149" width="6" height="1" fill="#d4d0c8"/><rect x="7" y="138" width="6" height="1" fill="#000"/><rect x="5" y="139" width="10" height="1" fill="#000"/><rect x="4" y="140" width="3" height="1" fill="#000"/><rect x="13" y="140" width="3" height="1" fill="#000"/><rect x="4" y="141" width="2" height="1" fill="#000"/><rect x="14" y="141" width="2" height="1" fill="#000"/><rect x="3" y="142" width="2" height="6" fill="#000"/><rect x="15" y="142" width="2" height="6" fill="#000"/><rect x="4" y="148" width="2" height="1" fill="#000"/><rect x="14" y="148" width="2" height="1" fill="#000"/><rect x="4" y="149" width="3" height="1" fill="#000"/><rect x="13" y="149" width="3" height="1" fill="#000"/><rect x="5" y="150" width="10" height="1" fill="#000"/><rect x="7" y="151" width="6" height="1" fill="#000"/><rect x="11" y="142" width="2" height="1" fill="#000"/><rect x="10" y="143" width="2" height="1" fill="#000"/><rect x="9" y="144" width="2" height="1" fill="#000"/><rect x="9" y="145" width="1" height="1" fill="#000"/><rect x="11" y="145" width="7" height="3" fill="#fff"/><rect x="11" y="146" width="4" height="8" fill="#fff"/><rect x="15" y="146" width="4" height="4" fill="#fff"/><rect x="11" y="148" width="7" height="3" fill="#fff"/><rect x="14" y="147" width="2" height="2" fill="#a0e8ff"/><rect x="12" y="146" width="5" height="1" fill="#14a0f0"/><rect x="12" y="147" width="2" height="6" fill="#14a0f0"/><rect x="16" y="147" width="2" height="2" fill="#14a0f0"/><rect x="12" y="149" width="5" height="1" fill="#14a0f0"/><rect x="7" y="157" width="6" height="1" fill="#d4d0c8"/><rect x="6" y="158" width="8" height="1" fill="#d4d0c8"/><rect x="5" y="159" width="10" height="6" fill="#d4d0c8"/><rect x="6" y="165" width="8" height="1" fill="#d4d0c8"/><rect x="7" y="166" width="6" height="1" fill="#d4d0c8"/><rect x="7" y="155" width="6" height="1" fill="#000"/><rect x="5" y="156" width="10" height="1" fill="#000"/><rect x="4" y="157" width="3" height="1" fill="#000"/><rect x="13" y="157" width="3" height="1" fill="#000"/><rect x="4" y="158" width="2" height="1" fill="#000"/><rect x="14" y="158" width="2" height="1" fill="#000"/><rect x="3" y="159" width="2" height="6" fill="#000"/><rect x="15" y="159" width="2" height="6" fill="#000"/><rect x="4" y="165" width="2" height="1" fill="#000"/><rect x="14" y="165" width="2" height="1" fill="#000"/><rect x="4" y="166" width="3" height="1" fill="#000"/><rect x="13" y="166" width="3" height="1" fill="#000"/><rect x="5" y="167" width="10" height="1" fill="#000"/><rect x="7" y="168" width="6" height="1" fill="#000"/><rect x="11" y="159" width="2" height="1" fill="#000"/><rect x="10" y="160" width="2" height="1" fill="#000"/><rect x="9" y="161" width="2" height="1" fill="#000"/><rect x="9" y="162" width="1" height="1" fill="#000"/><rect x="11" y="162" width="7" height="3" fill="#fff"/><rect x="11" y="163" width="4" height="8" fill="#fff"/><rect x="15" y="163" width="4" height="4" fill="#fff"/><rect x="11" y="165" width="7" height="3" fill="#fff"/><rect x="14" y="164" width="2" height="2" fill="#a0e8ff"/><rect x="12" y="163" width="5" height="1" fill="#14a0f0"/><rect x="12" y="164" width="2" height="6" fill="#14a0f0"/><rect x="16" y="164" width="2" height="2" fill="#14a0f0"/><rect x="12" y="166" width="5" height="1" fill="#14a0f0"/><rect x="7" y="174" width="6" height="1" fill="#d4d0c8"/><rect x="6" y="175" width="8" height="1" fill="#d4d0c8"/><rect x="5" y="176" width="10" height="6" fill="#d4d0c8"/><rect x="6" y="182" width="8" height="1" fill="#d4d0c8"/><rect x="7" y="183" width="6" height="1" fill="#d4d0c8"/><rect x="7" y="172" width="6" height="1" fill="#000"/><rect x="5" y="173" width="10" height="1" fill="#000"/><rect x="4" y="174" width="3" height="1" fill="#000"/><rect x="13" y="174" width="3" height="1" fill="#000"/><rect x="4" y="175" width="2" height="1" fill="#000"/><rect x="14" y="175" width="2" height="1" fill="#000"/><rect x="3" y="176" width="2" height="6" fill="#000"/><rect x="15" y="176" width="2" height="6" fill="#000"/><rect x="4" y="182" width="2" height="1" fill="#000"/><rect x="14" y="182" width="2" height="1" fill="#000"/><rect x="4" y="183" width="3" height="1" fill="#000"/><rect x="13" y="183" width="3" height="1" fill="#000"/><rect x="5" y="184" width="10" height="1" fill="#000"/><rect x="7" y="185" width="6" height="1" fill="#000"/><rect x="11" y="176" width="2" height="1" fill="#000"/><rect x="10" y="177" width="2" height="1" fill="#000"/><rect x="9" y="178" width="2" height="1" fill="#000"/><rect x="9" y="179" width="1" height="1" fill="#000"/><rect x="11" y="179" width="7" height="3" fill="#fff"/><rect x="11" y="180" width="4" height="8" fill="#fff"/><rect x="15" y="180" width="4" height="4" fill="#fff"/><rect x="11" y="182" width="7" height="3" fill="#fff"/><rect x="14" y="181" width="2" height="2" fill="#a0e8ff"/><rect x="12" y="180" width="5" height="1" fill="#14a0f0"/><rect x="12" y="181" width="2" height="6" fill="#14a0f0"/><rect x="16" y="181" width="2" height="2" fill="#14a0f0"/><rect x="12" y="183" width="5" height="1" fill="#14a0f0"/><rect x="7" y="191" width="6" height="1" fill="#d4d0c8"/><rect x="6" y="192" width="8" height="1" fill="#d4d0c8"/><rect x="5" y="193" width="10" height="6" fill="#d4d0c8"/><rect x="6" y="199" width="8" height="1" fill="#d4d0c8"/><rect x="7" y="200" width="6" height="1" fill="#d4d0c8"/><rect x="7" y="189" width="6" height="1" fill="#000"/><rect x="5" y="190" width="10" height="1" fill="#000"/><rect x="4" y="191" width="3" height="1" fill="#000"/><rect x="13" y="191" width="3" height="1" fill="#000"/><rect x="4" y="192" width="2" height="1" fill="#000"/><rect x="14" y="192" width="2" height="1" fill="#000"/><rect x="3" y="193" width="2" height="6" fill="#000"/><rect x="15" y="193" width="2" height="6" fill="#000"/><rect x="4" y="199" width="2" height="1" fill="#000"/><rect x="14" y="199" width="2" height="1" fill="#000"/><rect x="4" y="200" width="3" height="1" fill="#000"/><rect x="13" y="200" width="3" height="1" fill="#000"/><rect x="5" y="201" width="10" height="1" fill="#000"/><rect x="7" y="202" width="6" height="1" fill="#000"/><rect x="11" y="193" width="2" height="1" fill="#000"/><rect x="10" y="194" width="2" height="1" fill="#000"/><rect x="9" y="195" width="2" height="1" fill="#000"/><rect x="9" y="196" width="1" height="1" fill="#000"/><rect x="11" y="196" width="4" height="9" fill="#fff"/><rect x="15" y="196" width="4" height="3" fill="#fff"/><rect x="14" y="197" width="4" height="3" fill="#fff"/><rect x="13" y="198" width="4" height="3" fill="#fff"/><rect x="13" y="199" width="3" height="3" fill="#fff"/><rect x="13" y="200" width="4" height="3" fill="#fff"/><rect x="14" y="201" width="4" height="3" fill="#fff"/><rect x="15" y="202" width="4" height="3" fill="#fff"/><rect x="12" y="197" width="2" height="7" fill="#0a32a0"/><rect x="16" y="197" width="2" height="1" fill="#0a32a0"/><rect x="15" y="198" width="2" height="1" fill="#0a32a0"/><rect x="14" y="199" width="2" height="1" fill="#0a32a0"/><rect x="14" y="200" width="1" height="1" fill="#0a32a0"/><rect x="14" y="201" width="2" height="1" fill="#0a32a0"/><rect x="15" y="202" width="2" height="1" fill="#0a32a0"/><rect x="16" y="203" width="2" height="1" fill="#0a32a0"/><rect x="7" y="208" width="6" height="1" fill="#d4d0c8"/><rect x="6" y="209" width="8" height="1" fill="#d4d0c8"/><rect x="5" y="210" width="10" height="6" fill="#d4d0c8"/><rect x="6" y="216" width="8" height="1" fill="#d4d0c8"/><rect x="7" y="217" width="6" height="1" fill="#d4d0c8"/><rect x="7" y="206" width="6" height="1" fill="#000"/><rect x="5" y="207" width="10" height="1" fill="#000"/><rect x="4" y="208" width="3" height="1" fill="#000"/><rect x="13" y="208" width="3" height="1" fill="#000"/><rect x="4" y="209" width="2" height="1" fill="#000"/><rect x="14" y="209" width="2" height="1" fill="#000"/><rect x="3" y="210" width="2" height="6" fill="#000"/><rect x="15" y="210" width="2" height="6" fill="#000"/><rect x="4" y="216" width="2" height="1" fill="#000"/><rect x="14" y="216" width="2" height="1" fill="#000"/><rect x="4" y="217" width="3" height="1" fill="#000"/><rect x="13" y="217" width="3" height="1" fill="#000"/><rect x="5" y="218" width="10" height="1" fill="#000"/><rect x="7" y="219" width="6" height="1" fill="#000"/><rect x="11" y="210" width="2" height="1" fill="#000"/><rect x="10" y="211" width="2" height="1" fill="#000"/><rect x="9" y="212" width="2" height="1" fill="#000"/><rect x="9" y="213" width="1" height="1" fill="#000"/><rect x="11" y="213" width="7" height="3" fill="#fff"/><rect x="11" y="214" width="4" height="8" fill="#fff"/><rect x="15" y="214" width="4" height="4" fill="#fff"/><rect x="11" y="216" width="7" height="3" fill="#fff"/><rect x="14" y="215" width="2" height="2" fill="#a0e8ff"/><rect x="12" y="214" width="5" height="1" fill="#14a0f0"/><rect x="12" y="215" width="2" height="6" fill="#14a0f0"/><rect x="16" y="215" width="2" height="2" fill="#14a0f0"/><rect x="12" y="217" width="5" height="1" fill="#14a0f0"/><rect x="7" y="225" width="6" height="1" fill="#d4d0c8"/><rect x="6" y="226" width="8" height="1" fill="#d4d0c8"/><rect x="5" y="227" width="10" height="6" fill="#d4d0c8"/><rect x="6" y="233" width="8" height="1" fill="#d4d0c8"/><rect x="7" y="234" width="6" height="1" fill="#d4d0c8"/><rect x="7" y="223" width="6" height="1" fill="#000"/><rect x="5" y="224" width="10" height="1" fill="#000"/><rect x="4" y="225" width="3" height="1" fill="#000"/><rect x="13" y="225" width="3" height="1" fill="#000"/><rect x="4" y="226" width="2" height="1" fill="#000"/><rect x="14" y="226" width="2" height="1" fill="#000"/><rect x="3" y="227" width="2" height="6" fill="#000"/><rect x="15" y="227" width="2" height="6" fill="#000"/><rect x="4" y="233" width="2" height="1" fill="#000"/><rect x="14" y="233" width="2" height="1" fill="#000"/><rect x="4" y="234" width="3" height="1" fill="#000"/><rect x="13" y="234" width="3" height="1" fill="#000"/><rect x="5" y="235" width="10" height="1" fill="#000"/><rect x="7" y="236" width="6" height="1" fill="#000"/><rect x="11" y="227" width="2" height="1" fill="#000"/><rect x="10" y="228" width="2" height="1" fill="#000"/><rect x="9" y="229" width="2" height="1" fill="#000"/><rect x="9" y="230" width="1" height="1" fill="#000"/><rect x="11" y="230" width="7" height="3" fill="#fff"/><rect x="11" y="231" width="4" height="8" fill="#fff"/><rect x="15" y="231" width="4" height="4" fill="#fff"/><rect x="11" y="233" width="7" height="3" fill="#fff"/><rect x="14" y="232" width="2" height="2" fill="#a0e8ff"/><rect x="12" y="231" width="5" height="1" fill="#14a0f0"/><rect x="12" y="232" width="2" height="6" fill="#14a0f0"/><rect x="16" y="232" width="2" height="2" fill="#14a0f0"/><rect x="12" y="234" width="5" height="1" fill="#14a0f0"/><rect x="7" y="242" width="6" height="1" fill="#d4d0c8"/><rect x="6" y="243" width="8" height="1" fill="#d4d0c8"/><rect x="5" y="244" width="10" height="6" fill="#d4d0c8"/><rect x="6" y="250" width="8" height="1" fill="#d4d0c8"/><rect x="7" y="251" width="6" height="1" fill="#d4d0c8"/><rect x="7" y="240" width="6" height="1" fill="#000"/><rect x="5" y="241" width="10" height="1" fill="#000"/><rect x="4" y="242" width="3" height="1" fill="#000"/><rect x="13" y="242" width="3" height="1" fill="#000"/><rect x="4" y="243" width="2" height="1" fill="#000"/><rect x="14" y="243" width="2" height="1" fill="#000"/><rect x="3" y="244" width="2" height="6" fill="#000"/><rect x="15" y="244" width="2" height="6" fill="#000"/><rect x="4" y="250" width="2" height="1" fill="#000"/><rect x="14" y="250" width="2" height="1" fill="#000"/><rect x="4" y="251" width="3" height="1" fill="#000"/><rect x="13" y="251" width="3" height="1" fill="#000"/><rect x="5" y="252" width="10" height="1" fill="#000"/><rect x="7" y="253" width="6" height="1" fill="#000"/><rect x="11" y="244" width="2" height="1" fill="#000"/><rect x="10" y="245" width="2" height="1" fill="#000"/><rect x="9" y="246" width="2" height="1" fill="#000"/><rect x="9" y="247" width="1" height="1" fill="#000"/><rect x="11" y="247" width="4" height="9" fill="#fff"/><rect x="15" y="247" width="4" height="3" fill="#fff"/><rect x="14" y="248" width="4" height="3" fill="#fff"/><rect x="13" y="249" width="4" height="3" fill="#fff"/><rect x="13" y="250" width="3" height="3" fill="#fff"/><rect x="13" y="251" width="4" height="3" fill="#fff"/><rect x="14" y="252" width="4" height="3" fill="#fff"/><rect x="15" y="253" width="4" height="3" fill="#fff"/><rect x="12" y="248" width="2" height="7" fill="#0a32a0"/><rect x="16" y="248" width="2" height="1" fill="#0a32a0"/><rect x="15" y="249" width="2" height="1" fill="#0a32a0"/><rect x="14" y="250" width="2" height="1" fill="#0a32a0"/><rect x="14" y="251" width="1" height="1" fill="#0a32a0"/><rect x="14" y="252" width="2" height="1" fill="#0a32a0"/><rect x="15" y="253" width="2" height="1" fill="#0a32a0"/><rect x="16" y="254" width="2" height="1" fill="#0a32a0"/><rect x="7" y="259" width="6" height="1" fill="#d4d0c8"/><rect x="6" y="260" width="8" height="1" fill="#d4d0c8"/><rect x="5" y="261" width="10" height="6" fill="#d4d0c8"/><rect x="6" y="267" width="8" height="1" fill="#d4d0c8"/><rect x="7" y="268" width="6" height="1" fill="#d4d0c8"/><rect x="7" y="257" width="6" height="1" fill="#000"/><rect x="5" y="258" width="10" height="1" fill="#000"/><rect x="4" y="259" width="3" height="1" fill="#000"/><rect x="13" y="259" width="3" height="1" fill="#000"/><rect x="4" y="260" width="2" height="1" fill="#000"/><rect x="14" y="260" width="2" height="1" fill="#000"/><rect x="3" y="261" width="2" height="6" fill="#000"/><rect x="15" y="261" width="2" height="6" fill="#000"/><rect x="4" y="267" width="2" height="1" fill="#000"/><rect x="14" y="267" width="2" height="1" fill="#000"/><rect x="4" y="268" width="3" height="1" fill="#000"/><rect x="13" y="268" width="3" height="1" fill="#000"/><rect x="5" y="269" width="10" height="1" fill="#000"/><rect x="7" y="270" width="6" height="1" fill="#000"/><rect x="11" y="261" width="2" height="1" fill="#000"/><rect x="10" y="262" width="2" height="1" fill="#000"/><rect x="9" y="263" width="2" height="1" fill="#000"/><rect x="9" y="264" width="1" height="1" fill="#000"/><rect x="11" y="264" width="4" height="9" fill="#fff"/><rect x="15" y="264" width="4" height="3" fill="#fff"/><rect x="14" y="265" width="4" height="3" fill="#fff"/><rect x="13" y="266" width="4" height="3" fill="#fff"/><rect x="13" y="267" width="3" height="3" fill="#fff"/><rect x="13" y="268" width="4" height="3" fill="#fff"/><rect x="14" y="269" width="4" height="3" fill="#fff"/><rect x="15" y="270" width="4" height="3" fill="#fff"/><rect x="12" y="265" width="2" height="7" fill="#0a32a0"/><rect x="16" y="265" width="2" height="1" fill="#0a32a0"/><rect x="15" y="266" width="2" height="1" fill="#0a32a0"/><rect x="14" y="267" width="2" height="1" fill="#0a32a0"/><rect x="14" y="268" width="1" height="1" fill="#0a32a0"/><rect x="14" y="269" width="2" height="1" fill="#0a32a0"/><rect x="15" y="270" width="2" height="1" fill="#0a32a0"/><rect x="16" y="271" width="2" height="1" fill="#0a32a0"/></svg>
<div class="t" style="left:20.00px;top:4px;color:#000;">02</div>
<div class="t" style="left:138.00px;top:4px;color:#000;letter-spacing:-0.088px;">Расходомер Promass 63 DN 2 1/2&quot; E&amp;H</div>
<div class="t" style="left:346.00px;top:4px;color:#000;">ПИВ.ВАР.П1.Ox01.02</div>
<div class="t" style="left:19.00px;top:21px;color:#000;">FI.01</div>
<div class="t" style="left:138.00px;top:21px;color:#000;letter-spacing:0.300px;">Расходомер Promag 30 DN 100 E&amp;H</div>
<div class="t" style="left:346.00px;top:21px;color:#000;">ПИВ.ВАР.П1.Ox01.FI.01</div>
<div class="t" style="left:19.00px;top:38px;color:#000;">PE.01</div>
<div class="t" style="left:139.00px;top:38px;color:#000;letter-spacing:-0.091px;">Датчик давления CEROBAR PMP 46 ...</div>
<div class="t" style="left:346.00px;top:38px;color:#000;">ПИВ.ВАР.П1.Ox01.PE.01</div>
<div class="t" style="left:19.00px;top:55px;color:#000;">PI.01</div>
<div class="t" style="left:138.00px;top:55px;color:#000;">Манометр</div>
<div class="t" style="left:346.00px;top:55px;color:#000;">ПИВ.ВАР.П1.Ox01.PI.01</div>
<div class="t" style="left:19.00px;top:72px;color:#000;">PI.02</div>
<div class="t" style="left:138.00px;top:72px;color:#000;">Манометр</div>
<div class="t" style="left:346.00px;top:72px;color:#000;">ПИВ.ВАР.П1.Ox01.PI.02</div>
<div class="t" style="left:19.00px;top:89px;color:#000;">PI.03</div>
<div class="t" style="left:138.00px;top:89px;color:#000;">Манометр</div>
<div class="t" style="left:346.00px;top:89px;color:#000;">ПИВ.ВАР.П1.Ox01.PI.03</div>
<div class="t" style="left:19.00px;top:106px;color:#000;">PI.04</div>
<div class="t" style="left:138.00px;top:106px;color:#000;">Манометр</div>
<div class="t" style="left:346.00px;top:106px;color:#000;">ПИВ.ВАР.П1.Ox01.PI.04</div>
<div class="t" style="left:19.00px;top:123px;color:#000;">PI.05</div>
<div class="t" style="left:138.00px;top:123px;color:#000;letter-spacing:-0.125px;">Манометр TEMPRESS</div>
<div class="t" style="left:346.00px;top:123px;color:#000;">ПИВ.ВАР.П1.Ox01.PI.05</div>
<div class="t" style="left:19.00px;top:140px;color:#000;">PI.06</div>
<div class="t" style="left:138.00px;top:140px;color:#000;">Манометр</div>
<div class="t" style="left:346.00px;top:140px;color:#000;">ПИВ.ВАР.П1.Ox01.PI.06</div>
<div class="t" style="left:19.00px;top:157px;color:#000;">PI.07</div>
<div class="t" style="left:138.00px;top:157px;color:#000;">Манометр</div>
<div class="t" style="left:346.00px;top:157px;color:#000;">ПИВ.ВАР.П1.Ox01.PI.07</div>
<div class="t" style="left:19.00px;top:174px;color:#000;">PI.08</div>
<div class="t" style="left:138.00px;top:174px;color:#000;">Манометр</div>
<div class="t" style="left:346.00px;top:174px;color:#000;">ПИВ.ВАР.П1.Ox01.PI.08</div>
<div class="t" style="left:19.00px;top:191px;color:#000;">PI.09</div>
<div class="t" style="left:138.00px;top:191px;color:#000;">Манометр</div>
<div class="t" style="left:346.00px;top:191px;color:#000;">ПИВ.ВАР.П1.Ox01.PI.09</div>
<div class="t" style="left:19.00px;top:208px;color:#000;">PI.10</div>
<div class="t" style="left:138.00px;top:208px;color:#000;">Манометр</div>
<div class="t" style="left:346.00px;top:208px;color:#000;">ПИВ.ВАР.П1.Ox01.PI.10</div>
<div class="t" style="left:19.00px;top:225px;color:#000;">PI.11</div>
<div class="t" style="left:138.00px;top:225px;color:#000;">Манометр</div>
<div class="t" style="left:346.00px;top:225px;color:#000;">ПИВ.ВАР.П1.Ox01.PI.11</div>
<div class="t" style="left:20.00px;top:242px;color:#000;">TE.01</div>
<div class="t" style="left:139.00px;top:242px;color:#000;">Термопреобразователь</div>
<div class="t" style="left:346.00px;top:242px;color:#000;">ПИВ.ВАР.П1.Ox01.TE.01</div>
<div class="t" style="left:20.00px;top:259px;color:#000;">TE.02</div>
<div class="t" style="left:139.00px;top:259px;color:#000;">Термопреобразователь</div>
<div class="t" style="left:346.00px;top:259px;color:#000;">ПИВ.ВАР.П1.Ox01.TE.02</div>
</div>
<div style="left:940px;top:156px;width:16px;height:264px;background-color:#d4d0c8;background-image:linear-gradient(45deg,#fff 25%,transparent 25%,transparent 75%,#fff 75%),linear-gradient(45deg,#fff 25%,transparent 25%,transparent 75%,#fff 75%);background-size:2px 2px;background-position:0 0,1px 1px"></div>
<div style="left:940px;top:140px;width:16px;height:16px;background:#d4d0c8;box-shadow:inset -1px -1px #404040,inset 1px 1px #d4d0c8,inset -2px -2px #808080,inset 2px 2px #ffffff"></div>
<svg style="left:944px;top:146px;" width="7" height="4" viewBox="0 0 7 4" shape-rendering="crispEdges"><rect x="0" y="3" width="7" height="1" fill="#000"/><rect x="1" y="2" width="5" height="1" fill="#000"/><rect x="2" y="1" width="3" height="1" fill="#000"/><rect x="3" y="0" width="1" height="1" fill="#000"/></svg>
<div style="left:940px;top:156px;width:16px;height:218px;background:#d4d0c8;box-shadow:inset -1px -1px #404040,inset 1px 1px #d4d0c8,inset -2px -2px #808080,inset 2px 2px #ffffff"></div>
<div style="left:940px;top:404px;width:16px;height:16px;background:#d4d0c8;box-shadow:inset -1px -1px #404040,inset 1px 1px #d4d0c8,inset -2px -2px #808080,inset 2px 2px #ffffff"></div>
<svg style="left:944px;top:410px;" width="7" height="4" viewBox="0 0 7 4" shape-rendering="crispEdges"><rect x="0" y="0" width="7" height="1" fill="#000"/><rect x="1" y="1" width="5" height="1" fill="#000"/><rect x="2" y="2" width="3" height="1" fill="#000"/><rect x="3" y="3" width="1" height="1" fill="#000"/></svg>
<div style="left:582px;top:427px;width:65px;height:21px;background:#d4d0c8;box-shadow:inset -1px -1px #404040,inset 1px 1px #ffffff,inset -2px -2px #808080"></div>
<div class="t" style="left:588.00px;top:432px;color:#000;letter-spacing:0.143px;">Обновить</div>
<div style="left:655px;top:427px;width:65px;height:21px;background:#d4d0c8;box-shadow:inset -1px -1px #404040,inset 1px 1px #ffffff,inset -2px -2px #808080"></div>
<div class="t" style="left:661.00px;top:432px;color:#000;letter-spacing:0.143px;">Раскрыть</div>
<div style="left:728px;top:427px;width:65px;height:21px;background:#d4d0c8;box-shadow:inset -1px -1px #404040,inset 1px 1px #ffffff,inset -2px -2px #808080"></div>
<div class="t" style="left:741.00px;top:432px;color:#000;letter-spacing:1.000px;">Вид&gt;&gt;</div>
<div style="left:437px;top:461px;width:199px;height:25px;border:1px solid #808080;box-shadow:1px 1px #ffffff,inset 1px 1px #ffffff"></div>
<svg style="left:456px;top:468px;" width="12" height="12" viewBox="0 0 12 12" shape-rendering="crispEdges"><rect x="4" y="0" width="4" height="1" fill="#808080"/><rect x="2" y="1" width="2" height="1" fill="#808080"/><rect x="8" y="1" width="2" height="1" fill="#808080"/><rect x="1" y="2" width="1" height="2" fill="#808080"/><rect x="0" y="4" width="1" height="4" fill="#808080"/><rect x="1" y="8" width="1" height="2" fill="#808080"/><rect x="4" y="1" width="4" height="1" fill="#404040"/><rect x="2" y="2" width="2" height="1" fill="#404040"/><rect x="8" y="2" width="2" height="1" fill="#404040"/><rect x="2" y="3" width="1" height="1" fill="#404040"/><rect x="1" y="4" width="1" height="4" fill="#404040"/><rect x="2" y="8" width="1" height="1" fill="#404040"/><rect x="2" y="10" width="2" height="1" fill="#ffffff"/><rect x="4" y="11" width="4" height="1" fill="#ffffff"/><rect x="8" y="10" width="2" height="1" fill="#ffffff"/><rect x="10" y="8" width="1" height="2" fill="#ffffff"/><rect x="11" y="4" width="1" height="4" fill="#ffffff"/><rect x="10" y="2" width="1" height="2" fill="#ffffff"/><rect x="4" y="10" width="4" height="1" fill="#d4d0c8"/><rect x="2" y="9" width="2" height="1" fill="#d4d0c8"/><rect x="8" y="9" width="2" height="1" fill="#d4d0c8"/><rect x="9" y="8" width="1" height="1" fill="#d4d0c8"/><rect x="10" y="4" width="1" height="4" fill="#d4d0c8"/><rect x="9" y="3" width="1" height="1" fill="#d4d0c8"/><rect x="4" y="2" width="4" height="1" fill="#ffffff"/><rect x="3" y="3" width="6" height="1" fill="#ffffff"/><rect x="2" y="4" width="8" height="4" fill="#ffffff"/><rect x="3" y="8" width="6" height="1" fill="#ffffff"/><rect x="4" y="9" width="4" height="1" fill="#ffffff"/></svg>
<div class="t" style="left:476.00px;top:468px;color:#000;letter-spacing:0.250px;">тек. узел</div>
<svg style="left:549px;top:468px;" width="12" height="12" viewBox="0 0 12 12" shape-rendering="crispEdges"><rect x="4" y="0" width="4" height="1" fill="#808080"/><rect x="2" y="1" width="2" height="1" fill="#808080"/><rect x="8" y="1" width="2" height="1" fill="#808080"/><rect x="1" y="2" width="1" height="2" fill="#808080"/><rect x="0" y="4" width="1" height="4" fill="#808080"/><rect x="1" y="8" width="1" height="2" fill="#808080"/><rect x="4" y="1" width="4" height="1" fill="#404040"/><rect x="2" y="2" width="2" height="1" fill="#404040"/><rect x="8" y="2" width="2" height="1" fill="#404040"/><rect x="2" y="3" width="1" height="1" fill="#404040"/><rect x="1" y="4" width="1" height="4" fill="#404040"/><rect x="2" y="8" width="1" height="1" fill="#404040"/><rect x="2" y="10" width="2" height="1" fill="#ffffff"/><rect x="4" y="11" width="4" height="1" fill="#ffffff"/><rect x="8" y="10" width="2" height="1" fill="#ffffff"/><rect x="10" y="8" width="1" height="2" fill="#ffffff"/><rect x="11" y="4" width="1" height="4" fill="#ffffff"/><rect x="10" y="2" width="1" height="2" fill="#ffffff"/><rect x="4" y="10" width="4" height="1" fill="#d4d0c8"/><rect x="2" y="9" width="2" height="1" fill="#d4d0c8"/><rect x="8" y="9" width="2" height="1" fill="#d4d0c8"/><rect x="9" y="8" width="1" height="1" fill="#d4d0c8"/><rect x="10" y="4" width="1" height="4" fill="#d4d0c8"/><rect x="9" y="3" width="1" height="1" fill="#d4d0c8"/><rect x="4" y="2" width="4" height="1" fill="#ffffff"/><rect x="3" y="3" width="6" height="1" fill="#ffffff"/><rect x="2" y="4" width="8" height="4" fill="#ffffff"/><rect x="3" y="8" width="6" height="1" fill="#ffffff"/><rect x="4" y="9" width="4" height="1" fill="#ffffff"/><rect x="5" y="4" width="2" height="1" fill="#000"/><rect x="4" y="5" width="4" height="2" fill="#000"/><rect x="5" y="7" width="2" height="1" fill="#000"/></svg>
<div class="t" style="left:566.00px;top:468px;color:#000;letter-spacing:0.333px;">подч. узлы</div>
<div style="left:641px;top:461px;width:188px;height:25px;border:1px solid #808080;box-shadow:1px 1px #ffffff,inset 1px 1px #ffffff"></div>
<svg style="left:656px;top:468px;" width="12" height="12" viewBox="0 0 12 12" shape-rendering="crispEdges"><rect x="4" y="0" width="4" height="1" fill="#808080"/><rect x="2" y="1" width="2" height="1" fill="#808080"/><rect x="8" y="1" width="2" height="1" fill="#808080"/><rect x="1" y="2" width="1" height="2" fill="#808080"/><rect x="0" y="4" width="1" height="4" fill="#808080"/><rect x="1" y="8" width="1" height="2" fill="#808080"/><rect x="4" y="1" width="4" height="1" fill="#404040"/><rect x="2" y="2" width="2" height="1" fill="#404040"/><rect x="8" y="2" width="2" height="1" fill="#404040"/><rect x="2" y="3" width="1" height="1" fill="#404040"/><rect x="1" y="4" width="1" height="4" fill="#404040"/><rect x="2" y="8" width="1" height="1" fill="#404040"/><rect x="2" y="10" width="2" height="1" fill="#ffffff"/><rect x="4" y="11" width="4" height="1" fill="#ffffff"/><rect x="8" y="10" width="2" height="1" fill="#ffffff"/><rect x="10" y="8" width="1" height="2" fill="#ffffff"/><rect x="11" y="4" width="1" height="4" fill="#ffffff"/><rect x="10" y="2" width="1" height="2" fill="#ffffff"/><rect x="4" y="10" width="4" height="1" fill="#d4d0c8"/><rect x="2" y="9" width="2" height="1" fill="#d4d0c8"/><rect x="8" y="9" width="2" height="1" fill="#d4d0c8"/><rect x="9" y="8" width="1" height="1" fill="#d4d0c8"/><rect x="10" y="4" width="1" height="4" fill="#d4d0c8"/><rect x="9" y="3" width="1" height="1" fill="#d4d0c8"/><rect x="4" y="2" width="4" height="1" fill="#ffffff"/><rect x="3" y="3" width="6" height="1" fill="#ffffff"/><rect x="2" y="4" width="8" height="4" fill="#ffffff"/><rect x="3" y="8" width="6" height="1" fill="#ffffff"/><rect x="4" y="9" width="4" height="1" fill="#ffffff"/></svg>
<div class="t" style="left:672.00px;top:468px;color:#000;">П</div>
<svg style="left:697px;top:468px;" width="12" height="12" viewBox="0 0 12 12" shape-rendering="crispEdges"><rect x="4" y="0" width="4" height="1" fill="#808080"/><rect x="2" y="1" width="2" height="1" fill="#808080"/><rect x="8" y="1" width="2" height="1" fill="#808080"/><rect x="1" y="2" width="1" height="2" fill="#808080"/><rect x="0" y="4" width="1" height="4" fill="#808080"/><rect x="1" y="8" width="1" height="2" fill="#808080"/><rect x="4" y="1" width="4" height="1" fill="#404040"/><rect x="2" y="2" width="2" height="1" fill="#404040"/><rect x="8" y="2" width="2" height="1" fill="#404040"/><rect x="2" y="3" width="1" height="1" fill="#404040"/><rect x="1" y="4" width="1" height="4" fill="#404040"/><rect x="2" y="8" width="1" height="1" fill="#404040"/><rect x="2" y="10" width="2" height="1" fill="#ffffff"/><rect x="4" y="11" width="4" height="1" fill="#ffffff"/><rect x="8" y="10" width="2" height="1" fill="#ffffff"/><rect x="10" y="8" width="1" height="2" fill="#ffffff"/><rect x="11" y="4" width="1" height="4" fill="#ffffff"/><rect x="10" y="2" width="1" height="2" fill="#ffffff"/><rect x="4" y="10" width="4" height="1" fill="#d4d0c8"/><rect x="2" y="9" width="2" height="1" fill="#d4d0c8"/><rect x="8" y="9" width="2" height="1" fill="#d4d0c8"/><rect x="9" y="8" width="1" height="1" fill="#d4d0c8"/><rect x="10" y="4" width="1" height="4" fill="#d4d0c8"/><rect x="9" y="3" width="1" height="1" fill="#d4d0c8"/><rect x="4" y="2" width="4" height="1" fill="#ffffff"/><rect x="3" y="3" width="6" height="1" fill="#ffffff"/><rect x="2" y="4" width="8" height="4" fill="#ffffff"/><rect x="3" y="8" width="6" height="1" fill="#ffffff"/><rect x="4" y="9" width="4" height="1" fill="#ffffff"/></svg>
<div class="t" style="left:714.00px;top:468px;color:#000;">Об</div>
<svg style="left:747px;top:468px;" width="12" height="12" viewBox="0 0 12 12" shape-rendering="crispEdges"><rect x="4" y="0" width="4" height="1" fill="#808080"/><rect x="2" y="1" width="2" height="1" fill="#808080"/><rect x="8" y="1" width="2" height="1" fill="#808080"/><rect x="1" y="2" width="1" height="2" fill="#808080"/><rect x="0" y="4" width="1" height="4" fill="#808080"/><rect x="1" y="8" width="1" height="2" fill="#808080"/><rect x="4" y="1" width="4" height="1" fill="#404040"/><rect x="2" y="2" width="2" height="1" fill="#404040"/><rect x="8" y="2" width="2" height="1" fill="#404040"/><rect x="2" y="3" width="1" height="1" fill="#404040"/><rect x="1" y="4" width="1" height="4" fill="#404040"/><rect x="2" y="8" width="1" height="1" fill="#404040"/><rect x="2" y="10" width="2" height="1" fill="#ffffff"/><rect x="4" y="11" width="4" height="1" fill="#ffffff"/><rect x="8" y="10" width="2" height="1" fill="#ffffff"/><rect x="10" y="8" width="1" height="2" fill="#ffffff"/><rect x="11" y="4" width="1" height="4" fill="#ffffff"/><rect x="10" y="2" width="1" height="2" fill="#ffffff"/><rect x="4" y="10" width="4" height="1" fill="#d4d0c8"/><rect x="2" y="9" width="2" height="1" fill="#d4d0c8"/><rect x="8" y="9" width="2" height="1" fill="#d4d0c8"/><rect x="9" y="8" width="1" height="1" fill="#d4d0c8"/><rect x="10" y="4" width="1" height="4" fill="#d4d0c8"/><rect x="9" y="3" width="1" height="1" fill="#d4d0c8"/><rect x="4" y="2" width="4" height="1" fill="#ffffff"/><rect x="3" y="3" width="6" height="1" fill="#ffffff"/><rect x="2" y="4" width="8" height="4" fill="#ffffff"/><rect x="3" y="8" width="6" height="1" fill="#ffffff"/><rect x="4" y="9" width="4" height="1" fill="#ffffff"/></svg>
<div class="t" style="left:762.00px;top:468px;color:#000;">СИ</div>
<svg style="left:791px;top:468px;" width="12" height="12" viewBox="0 0 12 12" shape-rendering="crispEdges"><rect x="4" y="0" width="4" height="1" fill="#808080"/><rect x="2" y="1" width="2" height="1" fill="#808080"/><rect x="8" y="1" width="2" height="1" fill="#808080"/><rect x="1" y="2" width="1" height="2" fill="#808080"/><rect x="0" y="4" width="1" height="4" fill="#808080"/><rect x="1" y="8" width="1" height="2" fill="#808080"/><rect x="4" y="1" width="4" height="1" fill="#404040"/><rect x="2" y="2" width="2" height="1" fill="#404040"/><rect x="8" y="2" width="2" height="1" fill="#404040"/><rect x="2" y="3" width="1" height="1" fill="#404040"/><rect x="1" y="4" width="1" height="4" fill="#404040"/><rect x="2" y="8" width="1" height="1" fill="#404040"/><rect x="2" y="10" width="2" height="1" fill="#ffffff"/><rect x="4" y="11" width="4" height="1" fill="#ffffff"/><rect x="8" y="10" width="2" height="1" fill="#ffffff"/><rect x="10" y="8" width="1" height="2" fill="#ffffff"/><rect x="11" y="4" width="1" height="4" fill="#ffffff"/><rect x="10" y="2" width="1" height="2" fill="#ffffff"/><rect x="4" y="10" width="4" height="1" fill="#d4d0c8"/><rect x="2" y="9" width="2" height="1" fill="#d4d0c8"/><rect x="8" y="9" width="2" height="1" fill="#d4d0c8"/><rect x="9" y="8" width="1" height="1" fill="#d4d0c8"/><rect x="10" y="4" width="1" height="4" fill="#d4d0c8"/><rect x="9" y="3" width="1" height="1" fill="#d4d0c8"/><rect x="4" y="2" width="4" height="1" fill="#ffffff"/><rect x="3" y="3" width="6" height="1" fill="#ffffff"/><rect x="2" y="4" width="8" height="4" fill="#ffffff"/><rect x="3" y="8" width="6" height="1" fill="#ffffff"/><rect x="4" y="9" width="4" height="1" fill="#ffffff"/><rect x="5" y="4" width="2" height="1" fill="#000"/><rect x="4" y="5" width="4" height="2" fill="#000"/><rect x="5" y="7" width="2" height="1" fill="#000"/></svg>
<div class="t" style="left:804.00px;top:468px;color:#000;">все</div>
<div style="left:833px;top:461px;width:131px;height:25px;border:1px solid #808080;box-shadow:1px 1px #ffffff,inset 1px 1px #ffffff"></div>
<svg style="left:849px;top:469px;" width="12" height="12" viewBox="0 0 12 12" shape-rendering="crispEdges"><rect x="4" y="0" width="4" height="1" fill="#808080"/><rect x="2" y="1" width="2" height="1" fill="#808080"/><rect x="8" y="1" width="2" height="1" fill="#808080"/><rect x="1" y="2" width="1" height="2" fill="#808080"/><rect x="0" y="4" width="1" height="4" fill="#808080"/><rect x="1" y="8" width="1" height="2" fill="#808080"/><rect x="4" y="1" width="4" height="1" fill="#404040"/><rect x="2" y="2" width="2" height="1" fill="#404040"/><rect x="8" y="2" width="2" height="1" fill="#404040"/><rect x="2" y="3" width="1" height="1" fill="#404040"/><rect x="1" y="4" width="1" height="4" fill="#404040"/><rect x="2" y="8" width="1" height="1" fill="#404040"/><rect x="2" y="10" width="2" height="1" fill="#ffffff"/><rect x="4" y="11" width="4" height="1" fill="#ffffff"/><rect x="8" y="10" width="2" height="1" fill="#ffffff"/><rect x="10" y="8" width="1" height="2" fill="#ffffff"/><rect x="11" y="4" width="1" height="4" fill="#ffffff"/><rect x="10" y="2" width="1" height="2" fill="#ffffff"/><rect x="4" y="10" width="4" height="1" fill="#d4d0c8"/><rect x="2" y="9" width="2" height="1" fill="#d4d0c8"/><rect x="8" y="9" width="2" height="1" fill="#d4d0c8"/><rect x="9" y="8" width="1" height="1" fill="#d4d0c8"/><rect x="10" y="4" width="1" height="4" fill="#d4d0c8"/><rect x="9" y="3" width="1" height="1" fill="#d4d0c8"/><rect x="4" y="2" width="4" height="1" fill="#ffffff"/><rect x="3" y="3" width="6" height="1" fill="#ffffff"/><rect x="2" y="4" width="8" height="4" fill="#ffffff"/><rect x="3" y="8" width="6" height="1" fill="#ffffff"/><rect x="4" y="9" width="4" height="1" fill="#ffffff"/></svg>
<div class="t" style="left:863.00px;top:469px;color:#000;">форма</div>
<svg style="left:915px;top:469px;" width="12" height="12" viewBox="0 0 12 12" shape-rendering="crispEdges"><rect x="4" y="0" width="4" height="1" fill="#808080"/><rect x="2" y="1" width="2" height="1" fill="#808080"/><rect x="8" y="1" width="2" height="1" fill="#808080"/><rect x="1" y="2" width="1" height="2" fill="#808080"/><rect x="0" y="4" width="1" height="4" fill="#808080"/><rect x="1" y="8" width="1" height="2" fill="#808080"/><rect x="4" y="1" width="4" height="1" fill="#404040"/><rect x="2" y="2" width="2" height="1" fill="#404040"/><rect x="8" y="2" width="2" height="1" fill="#404040"/><rect x="2" y="3" width="1" height="1" fill="#404040"/><rect x="1" y="4" width="1" height="4" fill="#404040"/><rect x="2" y="8" width="1" height="1" fill="#404040"/><rect x="2" y="10" width="2" height="1" fill="#ffffff"/><rect x="4" y="11" width="4" height="1" fill="#ffffff"/><rect x="8" y="10" width="2" height="1" fill="#ffffff"/><rect x="10" y="8" width="1" height="2" fill="#ffffff"/><rect x="11" y="4" width="1" height="4" fill="#ffffff"/><rect x="10" y="2" width="1" height="2" fill="#ffffff"/><rect x="4" y="10" width="4" height="1" fill="#d4d0c8"/><rect x="2" y="9" width="2" height="1" fill="#d4d0c8"/><rect x="8" y="9" width="2" height="1" fill="#d4d0c8"/><rect x="9" y="8" width="1" height="1" fill="#d4d0c8"/><rect x="10" y="4" width="1" height="4" fill="#d4d0c8"/><rect x="9" y="3" width="1" height="1" fill="#d4d0c8"/><rect x="4" y="2" width="4" height="1" fill="#ffffff"/><rect x="3" y="3" width="6" height="1" fill="#ffffff"/><rect x="2" y="4" width="8" height="4" fill="#ffffff"/><rect x="3" y="8" width="6" height="1" fill="#ffffff"/><rect x="4" y="9" width="4" height="1" fill="#ffffff"/><rect x="5" y="4" width="2" height="1" fill="#000"/><rect x="4" y="5" width="4" height="2" fill="#000"/><rect x="5" y="7" width="2" height="1" fill="#000"/></svg>
<div class="t" style="left:929.00px;top:469px;color:#000;">табл.</div>
<div style="left:437px;top:491px;width:66px;height:20px;background:#d4d0c8;box-shadow:inset -1px -1px #404040,inset 1px 1px #ffffff,inset -2px -2px #808080"></div>
<div class="t" style="left:444.00px;top:495px;color:#000;"><u>Д</u>обавить</div>
<div style="left:507px;top:491px;width:66px;height:20px;background:#d4d0c8;box-shadow:inset -1px -1px #404040,inset 1px 1px #ffffff,inset -2px -2px #808080"></div>
<div class="t" style="left:511.00px;top:495px;color:#000;"><u>С</u>охранить</div>
<div style="left:577px;top:491px;width:66px;height:20px;background:#d4d0c8;box-shadow:inset -1px -1px #404040,inset 1px 1px #ffffff,inset -2px -2px #808080"></div>
<div class="t" style="left:587.00px;top:495px;color:#000;letter-spacing:0.333px;"><u>У</u>далить</div>
<div style="left:647px;top:491px;width:65px;height:20px;background:#d4d0c8;box-shadow:inset -1px -1px #404040,inset 1px 1px #ffffff,inset -2px -2px #808080"></div>
<div class="t" style="left:659.00px;top:495px;color:#000;letter-spacing:-0.400px;"><u>О</u>тмена</div>
<div style="left:872px;top:491px;width:64px;height:20px;background:#d4d0c8;box-shadow:inset -1px -1px #404040,inset 1px 1px #ffffff,inset -2px -2px #808080"></div>
<div class="t" style="left:897.00px;top:495px;color:#000;"><u>O</u>k</div>
<div style="left:942px;top:491px;width:23px;height:20px;background:#d4d0c8;box-shadow:inset -1px -1px #404040,inset 1px 1px #ffffff,inset -2px -2px #808080"></div>
<svg style="left:942px;top:491px;" width="23" height="20" viewBox="0 0 23 20" shape-rendering="crispEdges"><rect x="5" y="3" width="2" height="1" fill="#000080"/><rect x="4" y="4" width="4" height="1" fill="#000080"/><rect x="3" y="5" width="6" height="1" fill="#000080"/><rect x="5" y="6" width="2" height="2" fill="#000080"/><rect x="5" y="11" width="2" height="2" fill="#000080"/><rect x="3" y="13" width="6" height="1" fill="#000080"/><rect x="4" y="14" width="4" height="1" fill="#000080"/><rect x="5" y="15" width="2" height="1" fill="#000080"/><rect x="10" y="3" width="9" height="1" fill="#000"/><rect x="10" y="3" width="1" height="14" fill="#000"/><rect x="10" y="16" width="9" height="1" fill="#000"/><rect x="11" y="4" width="8" height="1" fill="#fff"/><rect x="11" y="4" width="1" height="12" fill="#fff"/></svg>
<div style="left:31px;top:514px;width:919px;height:106px;background:#fff"></div>
<div style="left:31px;top:514px;width:19px;height:14px;background:#d4d0c8;box-shadow:inset 1px 1px #ffffff"></div>
<div style="left:50px;top:514px;width:1px;height:105px;background:#000"></div>
<div style="left:51px;top:514px;width:35px;height:14px;background:#d4d0c8;box-shadow:inset 1px 1px #ffffff"></div>
<div style="left:86px;top:514px;width:1px;height:105px;background:#000"></div>
<div style="left:87px;top:514px;width:235px;height:14px;background:#d4d0c8;box-shadow:inset 1px 1px #ffffff"></div>
<div style="left:322px;top:514px;width:1px;height:105px;background:#000"></div>
<div style="left:323px;top:514px;width:60px;height:14px;background:#d4d0c8;box-shadow:inset 1px 1px #ffffff"></div>
<div style="left:383px;top:514px;width:1px;height:105px;background:#000"></div>
<div style="left:384px;top:514px;width:27px;height:14px;background:#d4d0c8;box-shadow:inset 1px 1px #ffffff"></div>
<div style="left:411px;top:514px;width:1px;height:105px;background:#000"></div>
<div style="left:412px;top:514px;width:150px;height:14px;background:#d4d0c8;box-shadow:inset 1px 1px #ffffff"></div>
<div style="left:562px;top:514px;width:1px;height:105px;background:#000"></div>
<div style="left:563px;top:514px;width:40px;height:14px;background:#d4d0c8;box-shadow:inset 1px 1px #ffffff"></div>
<div style="left:603px;top:514px;width:1px;height:105px;background:#000"></div>
<div style="left:604px;top:514px;width:100px;height:14px;background:#d4d0c8;box-shadow:inset 1px 1px #ffffff"></div>
<div style="left:704px;top:514px;width:1px;height:105px;background:#000"></div>
<div style="left:705px;top:514px;width:75px;height:14px;background:#d4d0c8;box-shadow:inset 1px 1px #ffffff"></div>
<div style="left:780px;top:514px;width:1px;height:105px;background:#000"></div>
<div style="left:781px;top:514px;width:77px;height:14px;background:#d4d0c8;box-shadow:inset 1px 1px #ffffff"></div>
<div style="left:858px;top:514px;width:1px;height:105px;background:#000"></div>
<div style="left:859px;top:514px;width:71px;height:14px;background:#d4d0c8;box-shadow:inset 1px 1px #ffffff"></div>
<div style="left:930px;top:514px;width:1px;height:105px;background:#000"></div>
<div style="left:931px;top:514px;width:18px;height:14px;background:#d4d0c8;box-shadow:inset 1px 1px #ffffff"></div>
<div style="left:949px;top:514px;width:1px;height:105px;background:#000"></div>
<div style="left:31px;top:528px;width:919px;height:1px;background:#000"></div>
<div style="left:31px;top:529px;width:19px;height:14px;background:#d4d0c8;box-shadow:inset 1px 1px #ffffff"></div>
<div style="left:31px;top:543px;width:20px;height:1px;background:#000"></div>
<div style="left:51px;top:543px;width:899px;height:1px;background:#c0c0c0"></div>
<div style="left:565px;top:530px;width:38px;height:13px;background:#c0c0c0"></div>
<div style="left:31px;top:544px;width:19px;height:14px;background:#d4d0c8;box-shadow:inset 1px 1px #ffffff"></div>
<div style="left:31px;top:558px;width:20px;height:1px;background:#000"></div>
<div style="left:51px;top:558px;width:899px;height:1px;background:#c0c0c0"></div>
<div style="left:565px;top:545px;width:38px;height:13px;background:#c0c0c0"></div>
<div style="left:31px;top:559px;width:19px;height:14px;background:#d4d0c8;box-shadow:inset 1px 1px #ffffff"></div>
<div style="left:31px;top:573px;width:20px;height:1px;background:#000"></div>
<div style="left:51px;top:573px;width:899px;height:1px;background:#c0c0c0"></div>
<div style="left:565px;top:560px;width:38px;height:13px;background:#c0c0c0"></div>
<div style="left:31px;top:574px;width:19px;height:14px;background:#d4d0c8;box-shadow:inset 1px 1px #ffffff"></div>
<div style="left:31px;top:588px;width:20px;height:1px;background:#000"></div>
<div style="left:51px;top:588px;width:899px;height:1px;background:#c0c0c0"></div>
<div style="left:565px;top:575px;width:38px;height:13px;background:#c0c0c0"></div>
<div style="left:31px;top:589px;width:19px;height:14px;background:#d4d0c8;box-shadow:inset 1px 1px #ffffff"></div>
<div style="left:31px;top:603px;width:20px;height:1px;background:#000"></div>
<div style="left:51px;top:603px;width:899px;height:1px;background:#c0c0c0"></div>
<div style="left:565px;top:590px;width:38px;height:13px;background:#c0c0c0"></div>
<div style="left:31px;top:604px;width:19px;height:14px;background:#d4d0c8;box-shadow:inset 1px 1px #ffffff"></div>
<div style="left:31px;top:618px;width:20px;height:1px;background:#000"></div>
<div style="left:51px;top:618px;width:899px;height:1px;background:#c0c0c0"></div>
<div style="left:565px;top:605px;width:38px;height:13px;background:#c0c0c0"></div>
<div style="left:86px;top:529px;width:1px;height:90px;background:#c0c0c0"></div>
<div style="left:322px;top:529px;width:1px;height:90px;background:#c0c0c0"></div>
<div style="left:383px;top:529px;width:1px;height:90px;background:#c0c0c0"></div>
<div style="left:411px;top:529px;width:1px;height:90px;background:#c0c0c0"></div>
<div style="left:562px;top:529px;width:1px;height:90px;background:#c0c0c0"></div>
<div style="left:603px;top:529px;width:1px;height:90px;background:#c0c0c0"></div>
<div style="left:704px;top:529px;width:1px;height:90px;background:#c0c0c0"></div>
<div style="left:780px;top:529px;width:1px;height:90px;background:#c0c0c0"></div>
<div style="left:858px;top:529px;width:1px;height:90px;background:#c0c0c0"></div>
<div style="left:930px;top:529px;width:1px;height:90px;background:#c0c0c0"></div>
<div style="left:949px;top:529px;width:1px;height:90px;background:#c0c0c0"></div>
<div style="left:50px;top:514px;width:1px;height:105px;background:#000"></div>
<div class="t" style="left:55.00px;top:515px;color:#000;font-weight:bold;letter-spacing:1.667px;">Узел</div>
<div class="t" style="left:172.00px;top:515px;color:#000;font-weight:bold;letter-spacing:0.500px;">Модель СИ</div>
<div class="t" style="left:326.00px;top:515px;color:#000;font-weight:bold;letter-spacing:0.714px;">Код типа</div>
<div class="t" style="left:392.00px;top:515px;color:#000;font-weight:bold;">№</div>
<div class="t" style="left:424.00px;top:515px;color:#000;font-weight:bold;letter-spacing:0.706px;">Место расположения</div>
<div class="t" style="left:566.00px;top:515px;color:#000;font-weight:bold;letter-spacing:1.000px;">Контр</div>
<div class="t" style="left:615.00px;top:515px;color:#000;font-weight:bold;letter-spacing:0.818px;">Метр. статус</div>
<div class="t" style="left:710.00px;top:515px;color:#000;font-weight:bold;letter-spacing:0.667px;">Посл. дата</div>
<div class="t" style="left:787.00px;top:515px;color:#000;font-weight:bold;letter-spacing:0.778px;">Посл. пов.</div>
<div class="t" style="left:867.00px;top:515px;color:#000;font-weight:bold;letter-spacing:0.625px;">Срок пов.</div>
<div style="left:931px;top:514px;width:19px;height:14px;overflow:hidden">
<div class="t" style="left:4.00px;top:1px;color:#000;font-weight:bold;">Ин</div>
</div>
<div style="left:54px;top:530px;width:15px;height:13px;background:#000"></div>
<div style="left:70px;top:530px;width:16px;height:13px;background:#d4d0c8;box-shadow:inset -1px -1px #404040,inset 1px 1px #ffffff,inset -2px -2px #808080"></div>
<svg style="left:75px;top:534px;" width="5" height="3" viewBox="0 0 5 3" shape-rendering="crispEdges"><rect x="0" y="0" width="5" height="1" fill="#000"/><rect x="1" y="1" width="3" height="1" fill="#000"/><rect x="2" y="2" width="1" height="1" fill="#000"/></svg>
<svg style="left:39px;top:530px;" width="7" height="12" viewBox="0 0 7 12" shape-rendering="crispEdges"><rect x="0" y="0" width="1" height="11" fill="#000"/><rect x="1" y="1" width="1" height="9" fill="#000"/><rect x="2" y="2" width="1" height="7" fill="#000"/><rect x="3" y="3" width="1" height="5" fill="#000"/><rect x="4" y="4" width="1" height="3" fill="#000"/><rect x="5" y="5" width="1" height="1" fill="#000"/></svg>
<div class="t" style="left:55.00px;top:531px;color:#fff;letter-spacing:-2.000px;">СИ</div>
<div class="t" style="left:90.00px;top:531px;color:#000;letter-spacing:-0.088px;">Расходомер Promass 63 DN 2 1/2&quot; E&amp;H</div>
<div class="t" style="left:348.50px;top:531px;color:#808080;">FI</div>
<div class="t" style="left:395.50px;top:531px;color:#000;">2</div>
<svg style="left:580px;top:534px;" width="8" height="8" viewBox="0 0 8 8" shape-rendering="crispEdges"><rect x="1" y="2" width="6" height="2" fill="#006a00"/><rect x="3" y="0" width="2" height="6" fill="#006a00"/></svg>
<div style="left:604px;top:529px;width:82px;height:14px;overflow:hidden">
<div class="t" style="left:3.00px;top:2px;color:#000;letter-spacing:0.083px;">Проверка рабо</div>
<div class="t" style="left:80.00px;top:2px;color:#000;">т</div>
</div>
<div class="t" style="left:722.00px;top:531px;color:#000;">25.07.10</div>
<div class="t" style="left:799.00px;top:531px;color:#000;">25.07.10</div>
<div class="t" style="left:874.50px;top:531px;color:#0a6a0a;">25.07.12</div>
<div class="t" style="left:55.00px;top:546px;color:#000;">СИ</div>
<div class="t" style="left:90.00px;top:546px;color:#000;letter-spacing:-0.184px;">Расходомер Promag 30 DN 100 м3/ч 2,6…7!</div>
<div class="t" style="left:348.50px;top:546px;color:#808080;">FI</div>
<div class="t" style="left:395.00px;top:546px;color:#000;">1</div>
<svg style="left:580px;top:549px;" width="8" height="8" viewBox="0 0 8 8" shape-rendering="crispEdges"><rect x="1" y="2" width="6" height="2" fill="#006a00"/><rect x="3" y="0" width="2" height="6" fill="#006a00"/></svg>
<div style="left:604px;top:544px;width:82px;height:14px;overflow:hidden">
<div class="t" style="left:3.00px;top:2px;color:#000;letter-spacing:0.083px;">Проверка рабо</div>
<div class="t" style="left:80.00px;top:2px;color:#000;">т</div>
</div>
<div class="t" style="left:721.50px;top:546px;color:#000;">15.07.10</div>
<div class="t" style="left:798.50px;top:546px;color:#000;">15.07.10</div>
<div class="t" style="left:874.00px;top:546px;color:#0a6a0a;">15.07.12</div>
<div class="t" style="left:55.00px;top:561px;color:#000;">СИ</div>
<div class="t" style="left:91.00px;top:561px;color:#000;letter-spacing:-0.114px;">Датчик давления CEROBAR PMP 46 бар 0</div>
<div class="t" style="left:346.00px;top:561px;color:#808080;">PE</div>
<div class="t" style="left:395.00px;top:561px;color:#000;">1</div>
<svg style="left:580px;top:564px;" width="8" height="8" viewBox="0 0 8 8" shape-rendering="crispEdges"><rect x="1" y="2" width="6" height="2" fill="#006a00"/><rect x="3" y="0" width="2" height="6" fill="#006a00"/></svg>
<div class="t" style="left:607.00px;top:561px;color:#000;">Калибровка</div>
<div class="t" style="left:722.50px;top:561px;color:#000;">08.11.09</div>
<div class="t" style="left:799.50px;top:561px;color:#000;">08.11.09</div>
<div class="t" style="left:875.00px;top:561px;color:#0a6a0a;">08.11.11</div>
<div class="t" style="left:55.00px;top:576px;color:#000;">СИ</div>
<div class="t" style="left:90.00px;top:576px;color:#000;letter-spacing:-0.217px;">Манометр бар 0…10 кл.1.0</div>
<div class="t" style="left:348.50px;top:576px;color:#808080;">PI</div>
<div class="t" style="left:395.00px;top:576px;color:#000;">1</div>
<svg style="left:580px;top:579px;" width="8" height="8" viewBox="0 0 8 8" shape-rendering="crispEdges"><rect x="1" y="2" width="6" height="2" fill="#006a00"/><rect x="3" y="0" width="2" height="6" fill="#006a00"/></svg>
<div class="t" style="left:607.00px;top:576px;color:#000;">Калибровка</div>
<div class="t" style="left:722.50px;top:576px;color:#000;">23.11.10</div>
<div class="t" style="left:799.50px;top:576px;color:#000;">23.11.10</div>
<div class="t" style="left:875.00px;top:576px;color:#0a6a0a;">23.11.11</div>
<div class="t" style="left:55.00px;top:591px;color:#000;">СИ</div>
<div class="t" style="left:90.00px;top:591px;color:#000;letter-spacing:-0.227px;">Манометр бар 0…6 кл.1,0</div>
<div class="t" style="left:348.50px;top:591px;color:#808080;">PI</div>
<div class="t" style="left:395.50px;top:591px;color:#000;">2</div>
<svg style="left:580px;top:594px;" width="8" height="8" viewBox="0 0 8 8" shape-rendering="crispEdges"><rect x="1" y="2" width="6" height="2" fill="#006a00"/><rect x="3" y="0" width="2" height="6" fill="#006a00"/></svg>
<div class="t" style="left:607.00px;top:591px;color:#000;">Калибровка</div>
<div class="t" style="left:722.50px;top:591px;color:#000;">05.11.10</div>
<div class="t" style="left:799.50px;top:591px;color:#000;">05.11.10</div>
<div class="t" style="left:875.00px;top:591px;color:#0a6a0a;">05.11.11</div>
<div class="t" style="left:55.00px;top:606px;color:#000;">СИ</div>
<div class="t" style="left:90.00px;top:606px;color:#000;letter-spacing:-0.227px;">Манометр бар 0…6 кл.2.5</div>
<div class="t" style="left:348.50px;top:606px;color:#808080;">PI</div>
<div class="t" style="left:395.00px;top:606px;color:#000;">3</div>
<svg style="left:580px;top:609px;" width="8" height="8" viewBox="0 0 8 8" shape-rendering="crispEdges"><rect x="1" y="2" width="6" height="2" fill="#006a00"/><rect x="3" y="0" width="2" height="6" fill="#006a00"/></svg>
<div style="left:604px;top:604px;width:82px;height:14px;overflow:hidden">
<div class="t" style="left:3.00px;top:2px;color:#000;letter-spacing:0.083px;">Проверка рабо</div>
<div class="t" style="left:80.00px;top:2px;color:#000;">т</div>
</div>
<div class="t" style="left:722.50px;top:606px;color:#000;">22.06.09</div>
<div class="t" style="left:799.50px;top:606px;color:#000;">22.06.09</div>
<div class="t" style="left:874.50px;top:606px;color:#0a6a0a;">22.06.11</div>
<div style="left:950px;top:514px;width:16px;height:106px;background-color:#d4d0c8;background-image:linear-gradient(45deg,#fff 25%,transparent 25%,transparent 75%,#fff 75%),linear-gradient(45deg,#fff 25%,transparent 25%,transparent 75%,#fff 75%);background-size:2px 2px;background-position:0 0,1px 1px"></div>
<div style="left:950px;top:514px;width:16px;height:16px;background:#d4d0c8;box-shadow:inset -1px -1px #404040,inset 1px 1px #d4d0c8,inset -2px -2px #808080,inset 2px 2px #ffffff"></div>
<svg style="left:954px;top:520px;" width="7" height="4" viewBox="0 0 7 4" shape-rendering="crispEdges"><rect x="0" y="3" width="7" height="1" fill="#000"/><rect x="1" y="2" width="5" height="1" fill="#000"/><rect x="2" y="1" width="3" height="1" fill="#000"/><rect x="3" y="0" width="1" height="1" fill="#000"/></svg>
<div style="left:950px;top:530px;width:16px;height:16px;background:#d4d0c8;box-shadow:inset -1px -1px #404040,inset 1px 1px #d4d0c8,inset -2px -2px #808080,inset 2px 2px #ffffff"></div>
<div style="left:950px;top:604px;width:16px;height:16px;background:#d4d0c8;box-shadow:inset -1px -1px #404040,inset 1px 1px #d4d0c8,inset -2px -2px #808080,inset 2px 2px #ffffff"></div>
<svg style="left:954px;top:610px;" width="7" height="4" viewBox="0 0 7 4" shape-rendering="crispEdges"><rect x="0" y="0" width="7" height="1" fill="#000"/><rect x="1" y="1" width="5" height="1" fill="#000"/><rect x="2" y="2" width="3" height="1" fill="#000"/><rect x="3" y="3" width="1" height="1" fill="#000"/></svg>
<div style="left:446px;top:620px;width:504px;height:16px;background-color:#d4d0c8;background-image:linear-gradient(45deg,#fff 25%,transparent 25%,transparent 75%,#fff 75%),linear-gradient(45deg,#fff 25%,transparent 25%,transparent 75%,#fff 75%);background-size:2px 2px;background-position:0 0,1px 1px"></div>
<div style="left:446px;top:620px;width:16px;height:16px;background:#d4d0c8;box-shadow:inset -1px -1px #404040,inset 1px 1px #d4d0c8,inset -2px -2px #808080,inset 2px 2px #ffffff"></div>
<svg style="left:452px;top:624px;" width="4" height="7" viewBox="0 0 4 7" shape-rendering="crispEdges"><rect x="3" y="0" width="1" height="7" fill="#000"/><rect x="2" y="1" width="1" height="5" fill="#000"/><rect x="1" y="2" width="1" height="3" fill="#000"/><rect x="0" y="3" width="1" height="1" fill="#000"/></svg>
<div style="left:462px;top:620px;width:79px;height:16px;background:#d4d0c8;box-shadow:inset -1px -1px #404040,inset 1px 1px #d4d0c8,inset -2px -2px #808080,inset 2px 2px #ffffff"></div>
<div style="left:934px;top:620px;width:16px;height:16px;background:#d4d0c8;box-shadow:inset -1px -1px #404040,inset 1px 1px #d4d0c8,inset -2px -2px #808080,inset 2px 2px #ffffff"></div>
<svg style="left:940px;top:624px;" width="4" height="7" viewBox="0 0 4 7" shape-rendering="crispEdges"><rect x="0" y="0" width="1" height="7" fill="#000"/><rect x="1" y="1" width="1" height="5" fill="#000"/><rect x="2" y="2" width="1" height="3" fill="#000"/><rect x="3" y="3" width="1" height="1" fill="#000"/></svg>
<div class="t" style="left:37.00px;top:622px;color:#000;">Запись:</div>
<div style="left:82px;top:621px;width:19px;height:15px;background:#d4d0c8;box-shadow:inset -1px -1px #404040,inset 1px 1px #ffffff,inset -2px -2px #808080"></div>
<svg style="left:82px;top:621px;" width="19" height="15" viewBox="0 0 19 15" shape-rendering="crispEdges"><rect x="6" y="4" width="2" height="7" fill="#000"/><rect x="9" y="7" width="1" height="1" fill="#000"/><rect x="10" y="6" width="1" height="3" fill="#000"/><rect x="11" y="5" width="1" height="5" fill="#000"/><rect x="12" y="4" width="1" height="7" fill="#000"/></svg>
<div style="left:101px;top:621px;width:20px;height:15px;background:#d4d0c8;box-shadow:inset -1px -1px #404040,inset 1px 1px #ffffff,inset -2px -2px #808080"></div>
<svg style="left:101px;top:621px;" width="20" height="15" viewBox="0 0 20 15" shape-rendering="crispEdges"><rect x="8" y="7" width="1" height="1" fill="#808080"/><rect x="9" y="6" width="1" height="3" fill="#808080"/><rect x="10" y="5" width="1" height="5" fill="#808080"/><rect x="11" y="4" width="1" height="7" fill="#808080"/><rect x="12" y="4" width="1" height="7" fill="#fff"/></svg>
<div style="left:126px;top:621px;width:64px;height:15px;background:#fff;box-shadow:inset 1px 1px #808080,inset -1px -1px #ffffff,inset 2px 2px #404040,inset -2px -2px #d4d0c8"></div>
<div class="t" style="left:181.00px;top:623px;color:#000;">1</div>
<div style="left:194px;top:621px;width:19px;height:15px;background:#d4d0c8;box-shadow:inset -1px -1px #404040,inset 1px 1px #ffffff,inset -2px -2px #808080"></div>
<svg style="left:194px;top:621px;" width="19" height="15" viewBox="0 0 19 15" shape-rendering="crispEdges"><rect x="7" y="4" width="1" height="7" fill="#000"/><rect x="8" y="5" width="1" height="5" fill="#000"/><rect x="9" y="6" width="1" height="3" fill="#000"/><rect x="10" y="7" width="1" height="1" fill="#000"/></svg>
<div style="left:213px;top:621px;width:20px;height:15px;background:#d4d0c8;box-shadow:inset -1px -1px #404040,inset 1px 1px #ffffff,inset -2px -2px #808080"></div>
<svg style="left:213px;top:621px;" width="20" height="15" viewBox="0 0 20 15" shape-rendering="crispEdges"><rect x="6" y="4" width="1" height="7" fill="#000"/><rect x="7" y="5" width="1" height="5" fill="#000"/><rect x="8" y="6" width="1" height="3" fill="#000"/><rect x="9" y="7" width="1" height="1" fill="#000"/><rect x="11" y="4" width="2" height="7" fill="#000"/></svg>
<div style="left:233px;top:621px;width:21px;height:15px;background:#d4d0c8;box-shadow:inset -1px -1px #404040,inset 1px 1px #ffffff,inset -2px -2px #808080"></div>
<svg style="left:233px;top:621px;" width="21" height="15" viewBox="0 0 21 15" shape-rendering="crispEdges"><rect x="4" y="3" width="1" height="8" fill="#000"/><rect x="5" y="4" width="1" height="6" fill="#000"/><rect x="6" y="5" width="1" height="4" fill="#000"/><rect x="7" y="6" width="1" height="2" fill="#000"/><rect x="13" y="3" width="1" height="7" fill="#000"/><rect x="10" y="6" width="7" height="1" fill="#000"/><rect x="11" y="4" width="1" height="1" fill="#000"/><rect x="15" y="4" width="1" height="1" fill="#000"/><rect x="12" y="5" width="3" height="1" fill="#000"/><rect x="12" y="7" width="3" height="1" fill="#000"/><rect x="11" y="8" width="1" height="1" fill="#000"/><rect x="15" y="8" width="1" height="1" fill="#000"/></svg>
<div style="left:254px;top:621px;width:20px;height:15px;background:#d4d0c8;box-shadow:inset -1px -1px #404040,inset 1px 1px #ffffff,inset -2px -2px #808080"></div>
<svg style="left:254px;top:621px;" width="20" height="15" viewBox="0 0 20 15" shape-rendering="crispEdges"><rect x="5" y="3" width="10" height="1" fill="#808080"/><rect x="4" y="4" width="12" height="1" fill="#808080"/><rect x="3" y="5" width="14" height="5" fill="#808080"/><rect x="4" y="10" width="12" height="1" fill="#808080"/><rect x="5" y="11" width="10" height="1" fill="#808080"/><rect x="7" y="5" width="2" height="1" fill="#fff"/><rect x="11" y="5" width="2" height="1" fill="#fff"/><rect x="8" y="6" width="4" height="1" fill="#fff"/><rect x="9" y="7" width="2" height="1" fill="#fff"/><rect x="8" y="8" width="4" height="1" fill="#fff"/><rect x="7" y="9" width="2" height="1" fill="#fff"/><rect x="11" y="9" width="2" height="1" fill="#fff"/></svg>
<div style="left:274px;top:621px;width:20px;height:15px;background:#d4d0c8;box-shadow:inset -1px -1px #404040,inset 1px 1px #ffffff,inset -2px -2px #808080"></div>
<svg style="left:274px;top:621px;" width="20" height="15" viewBox="0 0 20 15" shape-rendering="crispEdges"><rect x="3" y="2" width="1" height="10" fill="#000"/><rect x="4" y="3" width="1" height="8" fill="#000"/><rect x="5" y="4" width="1" height="6" fill="#000"/><rect x="6" y="5" width="1" height="4" fill="#000"/><rect x="7" y="6" width="1" height="2" fill="#000"/><rect x="9" y="3" width="2" height="6" fill="#000"/><rect x="9" y="10" width="2" height="1" fill="#000"/><rect x="13" y="10" width="1" height="1" fill="#000"/><rect x="16" y="10" width="1" height="1" fill="#000"/></svg>
<div class="t" style="left:299.00px;top:623px;color:#000;">из</div>
<div class="t" style="left:316.00px;top:623px;color:#000;">17</div>
<svg style="left:0px;top:0px;pointer-events:none" width="340" height="72" viewBox="0 0 340 72" shape-rendering="crispEdges"><rect x="26" y="53" width="1" height="3" fill="#fff"/><rect x="30" y="53" width="1" height="3" fill="#fff"/><rect x="27" y="56" width="1" height="2" fill="#fff"/><rect x="29" y="56" width="1" height="2" fill="#fff"/><rect x="28" y="58" width="1" height="2" fill="#fff"/><rect x="27" y="60" width="1" height="1" fill="#fff"/><rect x="29" y="60" width="1" height="1" fill="#fff"/><rect x="25" y="61" width="2" height="1" fill="#fff"/><rect x="24" y="62" width="1" height="3" fill="#fff"/><rect x="27" y="62" width="1" height="3" fill="#fff"/><rect x="25" y="65" width="2" height="1" fill="#fff"/><rect x="30" y="61" width="2" height="1" fill="#fff"/><rect x="29" y="62" width="1" height="3" fill="#fff"/><rect x="32" y="62" width="1" height="3" fill="#fff"/><rect x="30" y="65" width="2" height="1" fill="#fff"/><rect x="25" y="52" width="1" height="3" fill="#808080"/><rect x="29" y="52" width="1" height="3" fill="#808080"/><rect x="26" y="55" width="1" height="2" fill="#808080"/><rect x="28" y="55" width="1" height="2" fill="#808080"/><rect x="27" y="57" width="1" height="2" fill="#808080"/><rect x="26" y="59" width="1" height="1" fill="#808080"/><rect x="28" y="59" width="1" height="1" fill="#808080"/><rect x="24" y="60" width="2" height="1" fill="#808080"/><rect x="23" y="61" width="1" height="3" fill="#808080"/><rect x="26" y="61" width="1" height="3" fill="#808080"/><rect x="24" y="64" width="2" height="1" fill="#808080"/><rect x="29" y="60" width="2" height="1" fill="#808080"/><rect x="28" y="61" width="1" height="3" fill="#808080"/><rect x="31" y="61" width="1" height="3" fill="#808080"/><rect x="29" y="64" width="2" height="1" fill="#808080"/><rect x="44" y="53" width="5" height="1" fill="#fff"/><rect x="44" y="53" width="1" height="9" fill="#fff"/><rect x="44" y="61" width="5" height="1" fill="#fff"/><rect x="48" y="53" width="1" height="1" fill="#fff"/><rect x="46" y="55" width="2" height="1" fill="#fff"/><rect x="46" y="57" width="2" height="1" fill="#fff"/><rect x="46" y="59" width="2" height="1" fill="#fff"/><rect x="50" y="56" width="5" height="1" fill="#fff"/><rect x="50" y="56" width="1" height="10" fill="#fff"/><rect x="50" y="65" width="8" height="1" fill="#fff"/><rect x="57" y="58" width="1" height="8" fill="#fff"/><rect x="55" y="56" width="1" height="1" fill="#fff"/><rect x="56" y="57" width="1" height="1" fill="#fff"/><rect x="52" y="59" width="4" height="1" fill="#fff"/><rect x="52" y="61" width="4" height="1" fill="#fff"/><rect x="52" y="63" width="4" height="1" fill="#fff"/><rect x="43" y="52" width="5" height="1" fill="#808080"/><rect x="43" y="52" width="1" height="9" fill="#808080"/><rect x="43" y="60" width="5" height="1" fill="#808080"/><rect x="47" y="52" width="1" height="1" fill="#808080"/><rect x="45" y="54" width="2" height="1" fill="#808080"/><rect x="45" y="56" width="2" height="1" fill="#808080"/><rect x="45" y="58" width="2" height="1" fill="#808080"/><rect x="49" y="55" width="5" height="1" fill="#808080"/><rect x="49" y="55" width="1" height="10" fill="#808080"/><rect x="49" y="64" width="8" height="1" fill="#808080"/><rect x="56" y="57" width="1" height="8" fill="#808080"/><rect x="54" y="55" width="1" height="1" fill="#808080"/><rect x="55" y="56" width="1" height="1" fill="#808080"/><rect x="51" y="58" width="4" height="1" fill="#808080"/><rect x="51" y="60" width="4" height="1" fill="#808080"/><rect x="51" y="62" width="4" height="1" fill="#808080"/><rect x="70" y="53" width="7" height="1" fill="#fff"/><rect x="68" y="54" width="12" height="1" fill="#fff"/><rect x="67" y="55" width="14" height="10" fill="#fff"/><rect x="68" y="65" width="5" height="1" fill="#fff"/><rect x="69" y="52" width="7" height="1" fill="#808080"/><rect x="67" y="53" width="12" height="1" fill="#808080"/><rect x="66" y="54" width="14" height="10" fill="#808080"/><rect x="67" y="64" width="5" height="1" fill="#808080"/><rect x="70" y="55" width="5" height="1" fill="#fff"/><rect x="72" y="59" width="8" height="6" fill="#fff"/><rect x="72" y="59" width="7" height="1" fill="#808080"/><rect x="72" y="59" width="1" height="7" fill="#808080"/><rect x="72" y="65" width="9" height="1" fill="#808080"/><rect x="80" y="60" width="1" height="6" fill="#808080"/><rect x="74" y="61" width="3" height="1" fill="#808080"/><rect x="74" y="63" width="5" height="1" fill="#808080"/><rect x="92" y="57" width="1" height="5" fill="#fff"/><rect x="93" y="58" width="1" height="4" fill="#fff"/><rect x="94" y="59" width="1" height="3" fill="#fff"/><rect x="95" y="60" width="1" height="2" fill="#fff"/><rect x="96" y="61" width="1" height="1" fill="#fff"/><rect x="93" y="61" width="4" height="1" fill="#fff"/><rect x="96" y="59" width="2" height="1" fill="#fff"/><rect x="98" y="58" width="2" height="1" fill="#fff"/><rect x="100" y="57" width="3" height="1" fill="#fff"/><rect x="103" y="58" width="1" height="3" fill="#fff"/><rect x="102" y="61" width="1" height="2" fill="#fff"/><rect x="101" y="63" width="1" height="1" fill="#fff"/><rect x="91" y="56" width="1" height="5" fill="#808080"/><rect x="92" y="57" width="1" height="4" fill="#808080"/><rect x="93" y="58" width="1" height="3" fill="#808080"/><rect x="94" y="59" width="1" height="2" fill="#808080"/><rect x="95" y="60" width="1" height="1" fill="#808080"/><rect x="92" y="60" width="4" height="1" fill="#808080"/><rect x="95" y="58" width="2" height="1" fill="#808080"/><rect x="97" y="57" width="2" height="1" fill="#808080"/><rect x="99" y="56" width="3" height="1" fill="#808080"/><rect x="102" y="57" width="1" height="3" fill="#808080"/><rect x="101" y="60" width="1" height="2" fill="#808080"/><rect x="100" y="62" width="1" height="1" fill="#808080"/><rect x="117" y="52" width="1" height="1" fill="#fff"/><rect x="116" y="53" width="3" height="1" fill="#fff"/><rect x="116" y="54" width="1" height="2" fill="#fff"/><rect x="118" y="54" width="1" height="2" fill="#fff"/><rect x="115" y="56" width="5" height="1" fill="#fff"/><rect x="115" y="57" width="1" height="1" fill="#fff"/><rect x="119" y="57" width="1" height="1" fill="#fff"/><rect x="114" y="58" width="7" height="1" fill="#fff"/><rect x="115" y="60" width="6" height="1" fill="#fff"/><rect x="115" y="61" width="2" height="2" fill="#fff"/><rect x="118" y="61" width="2" height="6" fill="#fff"/><rect x="115" y="63" width="4" height="1" fill="#fff"/><rect x="116" y="64" width="2" height="1" fill="#fff"/><rect x="115" y="65" width="2" height="1" fill="#fff"/><rect x="114" y="66" width="3" height="1" fill="#fff"/><rect x="118" y="66" width="3" height="1" fill="#fff"/><rect x="125" y="52" width="1" height="14" fill="#fff"/><rect x="123" y="62" width="5" height="1" fill="#fff"/><rect x="124" y="63" width="3" height="1" fill="#fff"/><rect x="125" y="64" width="1" height="1" fill="#fff"/><rect x="116" y="51" width="1" height="1" fill="#808080"/><rect x="115" y="52" width="3" height="1" fill="#808080"/><rect x="115" y="53" width="1" height="2" fill="#808080"/><rect x="117" y="53" width="1" height="2" fill="#808080"/><rect x="114" y="55" width="5" height="1" fill="#808080"/><rect x="114" y="56" width="1" height="1" fill="#808080"/><rect x="118" y="56" width="1" height="1" fill="#808080"/><rect x="113" y="57" width="7" height="1" fill="#808080"/><rect x="114" y="59" width="6" height="1" fill="#808080"/><rect x="114" y="60" width="2" height="2" fill="#808080"/><rect x="117" y="60" width="2" height="6" fill="#808080"/><rect x="114" y="62" width="4" height="1" fill="#808080"/><rect x="115" y="63" width="2" height="1" fill="#808080"/><rect x="114" y="64" width="2" height="1" fill="#808080"/><rect x="113" y="65" width="3" height="1" fill="#808080"/><rect x="117" y="65" width="3" height="1" fill="#808080"/><rect x="124" y="51" width="1" height="14" fill="#808080"/><rect x="122" y="61" width="5" height="1" fill="#808080"/><rect x="123" y="62" width="3" height="1" fill="#808080"/><rect x="124" y="63" width="1" height="1" fill="#808080"/><rect x="138" y="52" width="6" height="1" fill="#fff"/><rect x="138" y="53" width="2" height="2" fill="#fff"/><rect x="141" y="53" width="2" height="6" fill="#fff"/><rect x="138" y="55" width="4" height="1" fill="#fff"/><rect x="139" y="56" width="2" height="1" fill="#fff"/><rect x="138" y="57" width="2" height="1" fill="#fff"/><rect x="137" y="58" width="3" height="1" fill="#fff"/><rect x="141" y="58" width="3" height="1" fill="#fff"/><rect x="140" y="60" width="1" height="1" fill="#fff"/><rect x="139" y="61" width="3" height="1" fill="#fff"/><rect x="139" y="62" width="1" height="2" fill="#fff"/><rect x="141" y="62" width="1" height="2" fill="#fff"/><rect x="138" y="64" width="5" height="1" fill="#fff"/><rect x="138" y="65" width="1" height="1" fill="#fff"/><rect x="142" y="65" width="1" height="1" fill="#fff"/><rect x="137" y="66" width="7" height="1" fill="#fff"/><rect x="148" y="52" width="1" height="14" fill="#fff"/><rect x="146" y="62" width="5" height="1" fill="#fff"/><rect x="147" y="63" width="3" height="1" fill="#fff"/><rect x="148" y="64" width="1" height="1" fill="#fff"/><rect x="137" y="51" width="6" height="1" fill="#808080"/><rect x="137" y="52" width="2" height="2" fill="#808080"/><rect x="140" y="52" width="2" height="6" fill="#808080"/><rect x="137" y="54" width="4" height="1" fill="#808080"/><rect x="138" y="55" width="2" height="1" fill="#808080"/><rect x="137" y="56" width="2" height="1" fill="#808080"/><rect x="136" y="57" width="3" height="1" fill="#808080"/><rect x="140" y="57" width="3" height="1" fill="#808080"/><rect x="139" y="59" width="1" height="1" fill="#808080"/><rect x="138" y="60" width="3" height="1" fill="#808080"/><rect x="138" y="61" width="1" height="2" fill="#808080"/><rect x="140" y="61" width="1" height="2" fill="#808080"/><rect x="137" y="63" width="5" height="1" fill="#808080"/><rect x="137" y="64" width="1" height="1" fill="#808080"/><rect x="141" y="64" width="1" height="1" fill="#808080"/><rect x="136" y="65" width="7" height="1" fill="#808080"/><rect x="147" y="51" width="1" height="14" fill="#808080"/><rect x="145" y="61" width="5" height="1" fill="#808080"/><rect x="146" y="62" width="3" height="1" fill="#808080"/><rect x="147" y="63" width="1" height="1" fill="#808080"/><rect x="159" y="52" width="3" height="1" fill="#000"/><rect x="166" y="52" width="3" height="1" fill="#000"/><rect x="159" y="53" width="3" height="3" fill="#000"/><rect x="166" y="53" width="3" height="3" fill="#000"/><rect x="158" y="56" width="5" height="1" fill="#000"/><rect x="165" y="56" width="5" height="1" fill="#000"/><rect x="158" y="57" width="6" height="1" fill="#000"/><rect x="164" y="57" width="6" height="1" fill="#000"/><rect x="157" y="58" width="14" height="5" fill="#000"/><rect x="157" y="63" width="6" height="2" fill="#000"/><rect x="165" y="63" width="6" height="2" fill="#000"/><rect x="159" y="59" width="1" height="2" fill="#fff"/><rect x="162" y="59" width="1" height="1" fill="#fff"/><rect x="165" y="59" width="1" height="1" fill="#fff"/><rect x="168" y="59" width="1" height="2" fill="#fff"/><rect x="160" y="53" width="1" height="1" fill="#fff"/><rect x="167" y="53" width="1" height="1" fill="#fff"/><rect x="183" y="52" width="2" height="2" fill="#fff"/><rect x="188" y="52" width="2" height="2" fill="#fff"/><rect x="182" y="54" width="4" height="2" fill="#fff"/><rect x="187" y="54" width="4" height="2" fill="#fff"/><rect x="182" y="56" width="9" height="3" fill="#fff"/><rect x="182" y="59" width="3" height="1" fill="#fff"/><rect x="187" y="59" width="3" height="1" fill="#fff"/><rect x="185" y="63" width="1" height="1" fill="#fff"/><rect x="187" y="63" width="1" height="1" fill="#fff"/><rect x="189" y="63" width="1" height="1" fill="#fff"/><rect x="191" y="63" width="5" height="1" fill="#fff"/><rect x="194" y="62" width="1" height="1" fill="#fff"/><rect x="194" y="64" width="1" height="1" fill="#fff"/><rect x="193" y="61" width="1" height="1" fill="#fff"/><rect x="193" y="65" width="1" height="1" fill="#fff"/><rect x="182" y="51" width="2" height="2" fill="#808080"/><rect x="187" y="51" width="2" height="2" fill="#808080"/><rect x="181" y="53" width="4" height="2" fill="#808080"/><rect x="186" y="53" width="4" height="2" fill="#808080"/><rect x="181" y="55" width="9" height="3" fill="#808080"/><rect x="181" y="58" width="3" height="1" fill="#808080"/><rect x="186" y="58" width="3" height="1" fill="#808080"/><rect x="184" y="62" width="1" height="1" fill="#808080"/><rect x="186" y="62" width="1" height="1" fill="#808080"/><rect x="188" y="62" width="1" height="1" fill="#808080"/><rect x="190" y="62" width="5" height="1" fill="#808080"/><rect x="193" y="61" width="1" height="1" fill="#808080"/><rect x="193" y="63" width="1" height="1" fill="#808080"/><rect x="192" y="60" width="1" height="1" fill="#808080"/><rect x="192" y="64" width="1" height="1" fill="#808080"/><rect x="206" y="51" width="1" height="1" fill="#000"/><rect x="205" y="52" width="3" height="1" fill="#000"/><rect x="205" y="53" width="1" height="2" fill="#000"/><rect x="207" y="53" width="1" height="2" fill="#000"/><rect x="204" y="55" width="5" height="1" fill="#000"/><rect x="204" y="56" width="1" height="1" fill="#000"/><rect x="208" y="56" width="1" height="1" fill="#000"/><rect x="206" y="59" width="1" height="1" fill="#000"/><rect x="206" y="61" width="1" height="1" fill="#000"/><rect x="207" y="63" width="1" height="1" fill="#000"/><rect x="209" y="64" width="1" height="1" fill="#000"/><rect x="211" y="64" width="1" height="1" fill="#000"/><rect x="213" y="64" width="1" height="1" fill="#000"/><rect x="214" y="62" width="1" height="5" fill="#000"/><rect x="215" y="63" width="1" height="3" fill="#000"/><rect x="216" y="64" width="1" height="1" fill="#000"/><rect x="214" y="57" width="1" height="1" fill="#000"/><rect x="213" y="55" width="1" height="1" fill="#000"/><rect x="215" y="53" width="1" height="1" fill="#000"/><rect x="216" y="51" width="3" height="1" fill="#000"/><rect x="218" y="51" width="1" height="3" fill="#000"/><rect x="217" y="52" width="1" height="1" fill="#000"/><rect x="217" y="58" width="4" height="1" fill="#808080"/><rect x="217" y="58" width="1" height="7" fill="#808080"/><rect x="217" y="61" width="3" height="1" fill="#808080"/><rect x="220" y="62" width="1" height="2" fill="#808080"/><rect x="217" y="64" width="3" height="1" fill="#808080"/></svg>
</body></html>
